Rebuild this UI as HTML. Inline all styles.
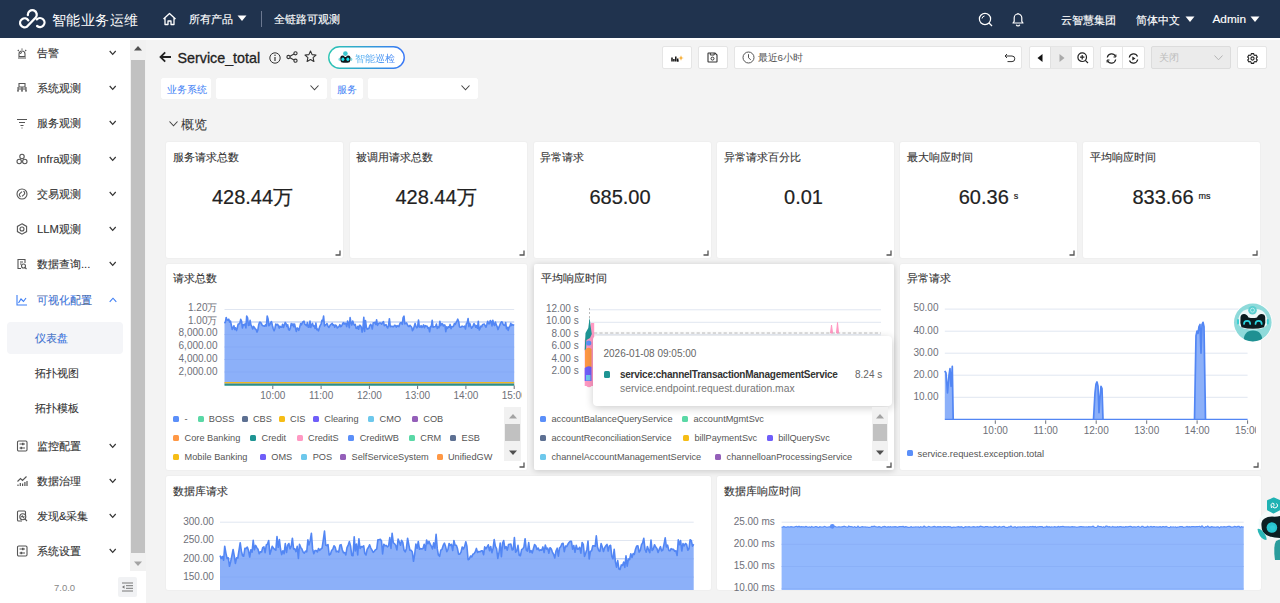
<!DOCTYPE html><html><head><meta charset="utf-8"><style>
*{box-sizing:border-box;margin:0;padding:0}
body{width:1280px;height:603px;overflow:hidden;background:#f3f3f3;-webkit-font-smoothing:antialiased;font-family:'Liberation Sans', sans-serif;position:relative;color:#333}
.a{position:absolute;white-space:nowrap}
.hd{left:0;top:0;width:1280px;height:38px;background:#20334e}
.ht{color:#fff;font-size:11.2px;line-height:14px;-webkit-text-stroke:0.15px #fff}
.sb{left:0;top:38px;width:146px;height:565px;background:#fff}
.mi{font-size:11.2px;color:#333;line-height:14px;-webkit-text-stroke:0.1px #333}
.chev{width:7px;height:7px;border-right:1.2px solid #555;border-bottom:1.2px solid #555;transform:rotate(45deg)}
.card{background:#fff;border-radius:2px;box-shadow:0 0 2px rgba(0,0,0,0.07)}
.ct{font-size:11.2px;color:#333;line-height:14px;-webkit-text-stroke:0.1px #333}
.big{font-size:20px;color:#222;line-height:24px;-webkit-text-stroke:0.2px #222}
.yl{font-size:10px;color:#6e7079;line-height:12px;text-align:right}
.xl{font-size:10px;color:#6e7079;line-height:12px}
.lg{font-size:9.2px;color:#555;line-height:12px}
.sq{width:6px;height:6px;border-radius:1.5px}
.btn{background:#fff;border:1px solid #e6e6e6;border-radius:2px}
.rz{width:4px;height:4px;border-right:1.5px solid #555;border-bottom:1.5px solid #555}
</style></head><body>

<div class="a hd"></div>
<svg class="a" style="left:15px;top:5px" width="35" height="28" viewBox="0 0 35 28">
<g fill="none" stroke="#fff" stroke-width="2.3" stroke-linecap="round">
<path d="M13.3 15.3 A4.5 4.5 0 1 0 11.8 21.8 L20.5 12.8 A4.5 4.5 0 1 0 12.8 10.0"/>
<path d="M21.8 14.4 A4.5 4.5 0 1 1 22.1 21.0"/>
</g></svg>
<div class="a" style="left:52px;top:10.5px;color:#fff;font-size:14.3px;letter-spacing:0.4px;line-height:18px">智能业务运维</div>
<svg class="a" style="left:162px;top:12px" width="15" height="14" viewBox="0 0 15 14"><path d="M1.5 7 L7.5 1.5 L13.5 7 M3 6 V12.5 H6 V9 H9 V12.5 H12 V6" fill="none" stroke="#fff" stroke-width="1.3" stroke-linejoin="round"/></svg>
<div class="a ht" style="left:188.5px;top:12.3px">所有产品</div>
<svg class="a" style="left:237px;top:15px" width="10" height="7"><path d="M0.5 0.5 L9.5 0.5 L5 6 Z" fill="#fff"/></svg>
<div class="a" style="left:261px;top:11px;width:1px;height:16px;background:#6b7890"></div>
<div class="a ht" style="left:274px;top:12.3px;font-size:11.4px">全链路可观测</div>
<svg class="a" style="left:978px;top:12px" width="16" height="15" viewBox="0 0 16 15"><circle cx="7" cy="7" r="5.6" fill="none" stroke="#fff" stroke-width="1.2"/><path d="M11 11 L14 14" stroke="#fff" stroke-width="1.3"/><path d="M4 6.5 A3 3 0 0 1 6.5 4" fill="none" stroke="#fff" stroke-width="1"/></svg>
<svg class="a" style="left:1010px;top:11px" width="16" height="16" viewBox="0 0 16 16"><path d="M3 12 H13 L11.8 10.3 V6.8 A3.8 3.8 0 0 0 4.2 6.8 V10.3 Z" fill="none" stroke="#fff" stroke-width="1.2" stroke-linejoin="round"/><path d="M6.3 13.8 A1.8 1.8 0 0 0 9.7 13.8" fill="none" stroke="#fff" stroke-width="1.2"/><path d="M8 2 V3" stroke="#fff" stroke-width="1.2"/></svg>
<div class="a ht" style="left:1061px;top:12.5px">云智慧集团</div>
<div class="a ht" style="left:1136px;top:12.5px">简体中文</div>
<svg class="a" style="left:1185px;top:16px" width="10" height="7"><path d="M0.5 0.5 L9.5 0.5 L5 6 Z" fill="#fff"/></svg>
<div class="a ht" style="left:1212.5px;top:12px;font-size:11.8px">Admin</div>
<svg class="a" style="left:1250px;top:16px" width="10" height="7"><path d="M0.5 0.5 L9.5 0.5 L5 6 Z" fill="#fff"/></svg>
<div class="a sb"></div>
<div class="a" style="left:0;top:38px;width:1280px;height:2px;background:#fff"></div>
<div class="a" style="left:130px;top:40px;width:16px;height:531px;background:#f1f1f1"></div>
<svg class="a" style="left:133px;top:45px" width="10" height="6"><path d="M1 5.5 L9 5.5 L5 1 Z" fill="#505050"/></svg>
<div class="a" style="left:131px;top:60px;width:14px;height:493px;background:#c1c1c1"></div>
<svg class="a" style="left:133px;top:561px" width="10" height="6"><path d="M1 0.5 L9 0.5 L5 5 Z" fill="#a3a3a3"/></svg>
<svg class="a" style="left:16px;top:47px" width="12" height="12" viewBox="0 0 12 12"><path d="M2 11 H10 M3 9.5 V7 A3 3 0 0 1 9 7 V9.5 Z M6 1.5 V2.8 M1.8 3 L2.8 4 M10.2 3 L9.2 4" fill="none" stroke="#555" stroke-width="1.1"/><path d="M4.5 7 A1.5 1.5 0 0 1 6 5.5" fill="none" stroke="#555" stroke-width="1.1"/></svg>
<div class="a mi" style="left:37px;top:46px;color:#333">告警</div>
<svg class="a" style="left:108.5px;top:50.2px" width="8" height="6"><path d="M0.7 1 L3.7 4.4 L6.7 1" fill="none" stroke="#333" stroke-width="1.15"/></svg>
<svg class="a" style="left:16px;top:82px" width="12" height="12" viewBox="0 0 12 12"><path d="M3 1.5 H9 V5 H3 Z M2 5 V9 M6 5 V9 M10 5 V9 M1 9 H3 M5 9 H7 M9 9 H11 M2 7 H10" fill="none" stroke="#555" stroke-width="1.1"/></svg>
<div class="a mi" style="left:37px;top:81px;color:#333">系统观测</div>
<svg class="a" style="left:108.5px;top:85.2px" width="8" height="6"><path d="M0.7 1 L3.7 4.4 L6.7 1" fill="none" stroke="#333" stroke-width="1.15"/></svg>
<svg class="a" style="left:16px;top:117px" width="12" height="12" viewBox="0 0 12 12"><path d="M1 2.5 H11 M3 5.5 H9 M4.5 8.5 H7.5 M5.5 11 H6.5" fill="none" stroke="#555" stroke-width="1.1"/></svg>
<div class="a mi" style="left:37px;top:116px;color:#333">服务观测</div>
<svg class="a" style="left:108.5px;top:120.2px" width="8" height="6"><path d="M0.7 1 L3.7 4.4 L6.7 1" fill="none" stroke="#333" stroke-width="1.15"/></svg>
<svg class="a" style="left:16px;top:152.5px" width="12" height="12" viewBox="0 0 12 12"><circle cx="6" cy="3.5" r="2.2" fill="none" stroke="#555" stroke-width="1.1"/><circle cx="3.2" cy="8.5" r="2.2" fill="none" stroke="#555" stroke-width="1.1"/><circle cx="8.8" cy="8.5" r="2.2" fill="none" stroke="#555" stroke-width="1.1"/></svg>
<div class="a mi" style="left:37px;top:151.5px;color:#333">Infra观测</div>
<svg class="a" style="left:108.5px;top:155.7px" width="8" height="6"><path d="M0.7 1 L3.7 4.4 L6.7 1" fill="none" stroke="#333" stroke-width="1.15"/></svg>
<svg class="a" style="left:16px;top:187.5px" width="12" height="12" viewBox="0 0 12 12"><circle cx="6" cy="6" r="5" fill="none" stroke="#555" stroke-width="1.1"/><path d="M7.3 3.3 A1.9 1.9 0 0 1 8.2 6.4 L6 8.4 M4.7 8.7 A1.9 1.9 0 0 1 3.8 5.6 L6 3.6" fill="none" stroke="#555" stroke-width="1.1"/></svg>
<div class="a mi" style="left:37px;top:186.5px;color:#333">交易观测</div>
<svg class="a" style="left:108.5px;top:190.7px" width="8" height="6"><path d="M0.7 1 L3.7 4.4 L6.7 1" fill="none" stroke="#333" stroke-width="1.15"/></svg>
<svg class="a" style="left:16px;top:222.5px" width="12" height="12" viewBox="0 0 12 12"><path d="M6 0.8 L10.6 3.4 V8.6 L6 11.2 L1.4 8.6 V3.4 Z" fill="none" stroke="#555" stroke-width="1.1"/><circle cx="6" cy="6" r="2" fill="none" stroke="#555" stroke-width="1.1"/></svg>
<div class="a mi" style="left:37px;top:221.5px;color:#333">LLM观测</div>
<svg class="a" style="left:108.5px;top:225.7px" width="8" height="6"><path d="M0.7 1 L3.7 4.4 L6.7 1" fill="none" stroke="#333" stroke-width="1.15"/></svg>
<svg class="a" style="left:16px;top:258px" width="12" height="12" viewBox="0 0 12 12"><path d="M9 5 V1.5 H2 V10.5 H5 M4 4 H7 M4 6 H5.5" fill="none" stroke="#555" stroke-width="1.1"/><circle cx="7.5" cy="8" r="2" fill="none" stroke="#555" stroke-width="1.1"/><path d="M9 9.5 L10.5 11" fill="none" stroke="#555" stroke-width="1.1"/></svg>
<div class="a mi" style="left:37px;top:257px;color:#333">数据查询...</div>
<svg class="a" style="left:108.5px;top:261.2px" width="8" height="6"><path d="M0.7 1 L3.7 4.4 L6.7 1" fill="none" stroke="#333" stroke-width="1.15"/></svg>
<svg class="a" style="left:16px;top:294px" width="12" height="12" viewBox="0 0 12 12"><path d="M1 1 V11 H11 M2.5 9 L5 5 L7.5 7.5 L10 4" fill="none" stroke="#3d7ef5" stroke-width="1.1"/></svg>
<div class="a mi" style="left:37px;top:293px;color:#3d7ef5">可视化配置</div>
<svg class="a" style="left:108.5px;top:297px" width="8" height="6"><path d="M0.7 4.8 L4 1.2 L7.3 4.8" fill="none" stroke="#3d7ef5" stroke-width="1.1"/></svg>
<svg class="a" style="left:16px;top:440px" width="12" height="12" viewBox="0 0 12 12"><rect x="1.5" y="1" width="9.5" height="10" rx="1.2" fill="none" stroke="#555" stroke-width="1.1"/><path d="M3.5 4 H9 M3.5 8 H9" fill="none" stroke="#555" stroke-width="1.1"/><rect x="6" y="2.8" width="1.6" height="2.4" fill="#555"/><rect x="4.5" y="6.8" width="1.6" height="2.4" fill="#555"/></svg>
<div class="a mi" style="left:37px;top:439px;color:#333">监控配置</div>
<svg class="a" style="left:108.5px;top:443.2px" width="8" height="6"><path d="M0.7 1 L3.7 4.4 L6.7 1" fill="none" stroke="#333" stroke-width="1.15"/></svg>
<svg class="a" style="left:16px;top:475px" width="12" height="12" viewBox="0 0 12 12"><path d="M1.5 6.5 L4.5 3.5 L6.5 5.5 L10.5 1.5" fill="none" stroke="#555" stroke-width="1.1"/><path d="M2 11 V9.5 M4.3 11 V8 M6.6 11 V8.5 M8.9 11 V7 M11 11 V6" stroke="#555" stroke-width="1.2"/></svg>
<div class="a mi" style="left:37px;top:474px;color:#333">数据治理</div>
<svg class="a" style="left:108.5px;top:478.2px" width="8" height="6"><path d="M0.7 1 L3.7 4.4 L6.7 1" fill="none" stroke="#333" stroke-width="1.15"/></svg>
<svg class="a" style="left:16px;top:510px" width="12" height="12" viewBox="0 0 12 12"><path d="M9.5 5 V2 Q9.5 1 8.5 1 H2.5 Q1.5 1 1.5 2 V10 Q1.5 11 2.5 11 H6" fill="none" stroke="#555" stroke-width="1.1"/><circle cx="6.8" cy="6.8" r="3" fill="none" stroke="#555" stroke-width="1.1"/><path d="M5.2 7.2 L6.3 6 L7.3 7.5 L8.4 6.3" fill="none" stroke="#555" stroke-width="1.1"/><path d="M9 9 L11 11" fill="none" stroke="#555" stroke-width="1.1"/></svg>
<div class="a mi" style="left:37px;top:509px;color:#333">发现&采集</div>
<svg class="a" style="left:108.5px;top:513.2px" width="8" height="6"><path d="M0.7 1 L3.7 4.4 L6.7 1" fill="none" stroke="#333" stroke-width="1.15"/></svg>
<svg class="a" style="left:16px;top:545px" width="12" height="12" viewBox="0 0 12 12"><rect x="1.5" y="1" width="9.5" height="10" rx="1.2" fill="none" stroke="#555" stroke-width="1.1"/><path d="M3.5 4 H9 M3.5 8 H9" fill="none" stroke="#555" stroke-width="1.1"/><rect x="6" y="2.8" width="1.6" height="2.4" fill="#555"/><rect x="4.5" y="6.8" width="1.6" height="2.4" fill="#555"/></svg>
<div class="a mi" style="left:37px;top:544px;color:#333">系统设置</div>
<svg class="a" style="left:108.5px;top:548.2px" width="8" height="6"><path d="M0.7 1 L3.7 4.4 L6.7 1" fill="none" stroke="#333" stroke-width="1.15"/></svg>
<div class="a" style="left:7px;top:322px;width:116px;height:32px;background:#f4f5f8;border-radius:4px"></div>
<div class="a mi" style="left:35px;top:331px;color:#3d7ef5">仪表盘</div>
<div class="a mi" style="left:35px;top:365.5px">拓扑视图</div>
<div class="a mi" style="left:35px;top:400.5px">拓扑模板</div>
<div class="a" style="left:54px;top:582px;font-size:9.5px;color:#888;line-height:12px">7.0.0</div>
<div class="a" style="left:118px;top:577px;width:19px;height:20px;background:#f1f2f4;border-radius:2px"></div>
<svg class="a" style="left:121px;top:582px" width="13" height="10"><path d="M1 1 H12 M5 3.7 H12 M5 6.3 H12 M1 9 H12" stroke="#777" stroke-width="1"/><path d="M3.5 3.3 L1 5 L3.5 6.7 Z" fill="#777"/></svg>
<svg class="a" style="left:159px;top:51px" width="13" height="12" viewBox="0 0 13 12"><path d="M12 6 H1.8 M6.2 1.4 L1.5 6 L6.2 10.6" fill="none" stroke="#222" stroke-width="1.8"/></svg>
<div class="a" style="left:177.5px;top:49px;font-size:14.3px;line-height:18px;color:#222;-webkit-text-stroke:0.3px #222">Service_total</div>
<svg class="a" style="left:269px;top:51.5px" width="12" height="12" viewBox="0 0 12 12"><circle cx="6" cy="6" r="5.2" fill="none" stroke="#333" stroke-width="1"/><path d="M6 5 V9" stroke="#333" stroke-width="1.2"/><circle cx="6" cy="3.3" r="0.75" fill="#333"/></svg>
<svg class="a" style="left:286px;top:51px" width="12" height="12" viewBox="0 0 12 12"><circle cx="9.5" cy="2.3" r="1.6" fill="none" stroke="#333" stroke-width="1.1"/><circle cx="2.5" cy="6" r="1.6" fill="none" stroke="#333" stroke-width="1.1"/><circle cx="9.5" cy="9.7" r="1.6" fill="none" stroke="#333" stroke-width="1.1"/><path d="M4 5.2 L8 3.1 M4 6.8 L8 8.9" stroke="#333" stroke-width="1.1"/></svg>
<svg class="a" style="left:304px;top:50px" width="13" height="13" viewBox="0 0 13 13"><path d="M6.5 1 L8.1 4.6 L12 5 L9.1 7.6 L9.9 11.5 L6.5 9.5 L3.1 11.5 L3.9 7.6 L1 5 L4.9 4.6 Z" fill="none" stroke="#333" stroke-width="1.1" stroke-linejoin="round"/></svg>
<svg class="a" style="left:328px;top:46px" width="77" height="23" viewBox="0 0 77 23"><defs><linearGradient id="gb" x1="0" x2="1"><stop offset="0" stop-color="#2cc5b3"/><stop offset="1" stop-color="#3a78f6"/></linearGradient><linearGradient id="gt" x1="0" x2="1"><stop offset="0" stop-color="#56c0ee"/><stop offset="1" stop-color="#3f86f4"/></linearGradient></defs>
<rect x="0.75" y="0.75" width="75.5" height="21.5" rx="10.75" fill="#fff" stroke="url(#gb)" stroke-width="1.4"/>
<circle cx="17.4" cy="7.6" r="2.3" fill="#3cc8cf"/>
<path d="M12.3 11.5 Q12.6 9.4 14.5 9.4 Q16 9.4 16.6 10.7 Q17.4 11.1 18.2 10.7 Q18.8 9.4 20.3 9.4 Q22.2 9.4 22.5 11.5 Q23 14.6 21.6 16.2 Q17.4 17.5 13.2 16.2 Q11.8 14.6 12.3 11.5 Z" fill="#0d1a1e"/>
<ellipse cx="14.9" cy="13.2" rx="1.5" ry="1.7" fill="#1ee3ee"/><ellipse cx="19.9" cy="13.2" rx="1.5" ry="1.7" fill="#1ee3ee"/>
<ellipse cx="11.4" cy="13.3" rx="0.9" ry="1.6" fill="#5ccfd6" opacity="0.8"/><ellipse cx="23.4" cy="13.3" rx="0.9" ry="1.6" fill="#5ccfd6" opacity="0.8"/>
</svg>
<div class="a" style="left:355px;top:52.5px;font-size:9.8px;line-height:12px;background:linear-gradient(90deg,#5ab9ef,#3e82f5);-webkit-background-clip:text;color:transparent">智能巡检</div>
<div class="a" style="left:662px;top:46px;width:30px;height:23px;background:#fff;border:1px solid #e5e5e5;border-radius:2px;"></div>
<svg class="a" style="left:670.5px;top:53.5px" width="13" height="8" viewBox="0 0 13 8"><path d="M1 7.5 V3.5 M2.9 7.5 V5 M4.8 7.5 V2.5 M6.7 7.5 V4.5" stroke="#111" stroke-width="1.5"/><path d="M6.2 7 H7.6" stroke="#111" stroke-width="1"/><path d="M10 1.2 L10.8 3.4 L12.8 4 L10.8 4.6 L10 6.8 L9.2 4.6 L7.2 4 L9.2 3.4 Z" fill="#f7a928"/></svg>
<div class="a" style="left:698px;top:46px;width:30px;height:23px;background:#fff;border:1px solid #e5e5e5;border-radius:2px;"></div>
<svg class="a" style="left:707px;top:52px" width="11" height="11" viewBox="0 0 11 11"><path d="M1 1.5 Q1 1 1.5 1 H8 L10 3 V9.5 Q10 10 9.5 10 H1.5 Q1 10 1 9.5 Z" fill="none" stroke="#333" stroke-width="1.1"/><path d="M3.3 1 V3 H7.2 V1" fill="none" stroke="#333" stroke-width="1"/><circle cx="5.5" cy="6.6" r="1.5" fill="none" stroke="#333" stroke-width="1"/></svg>
<div class="a" style="left:734px;top:46px;width:288px;height:23px;background:#fff;border:1px solid #e5e5e5;border-radius:2px;"></div>
<svg class="a" style="left:742px;top:51px" width="13" height="13" viewBox="0 0 13 13"><circle cx="6.5" cy="6.5" r="5.5" fill="none" stroke="#555" stroke-width="1"/><path d="M6.5 3.2 V6.8 L8.8 8.8" fill="none" stroke="#555" stroke-width="1"/></svg>
<div class="a" style="left:757.5px;top:51.5px;font-size:9.8px;line-height:12px;color:#555">最近6小时</div>
<svg class="a" style="left:1004px;top:53px" width="12" height="10" viewBox="0 0 12 10"><path d="M3 1 L1 3 L3 5" fill="none" stroke="#333" stroke-width="1"/><path d="M1.2 3 H8 A2.8 2.8 0 0 1 8 8.6 H3.5" fill="none" stroke="#333" stroke-width="1"/></svg>
<div class="a" style="left:1029px;top:46px;width:65px;height:23px;background:#fff;border:1px solid #e5e5e5;border-radius:2px;"></div>
<div class="a" style="left:1050px;top:47px;width:22px;height:21px;background:#ececec;border-left:1px solid #e0e0e0;border-right:1px solid #e8e8e8"></div>
<svg class="a" style="left:1037px;top:54px" width="6" height="8"><path d="M5.5 0 V8 L0.5 4 Z" fill="#111"/></svg>
<svg class="a" style="left:1059px;top:54px" width="6" height="8"><path d="M0.5 0 V8 L5.5 4 Z" fill="#aaa"/></svg>
<svg class="a" style="left:1077px;top:52px" width="12" height="12" viewBox="0 0 12 12"><circle cx="5.2" cy="5.2" r="4.3" fill="none" stroke="#222" stroke-width="1.2"/><path d="M8.3 8.3 L11 11 M5.2 3 V7.4 M3 5.2 H7.4" stroke="#222" stroke-width="1.2"/></svg>
<div class="a" style="left:1100px;top:46px;width:45px;height:23px;background:#fff;border:1px solid #e5e5e5;border-radius:2px;"></div>
<div class="a" style="left:1122px;top:47px;width:1px;height:21px;background:#e6e6e6"></div>
<svg class="a" style="left:1106px;top:53px" width="11" height="11" viewBox="0 0 11 11"><path d="M1.3 4.5 A4.3 4.3 0 0 1 9.5 3.5 M9.7 6.5 A4.3 4.3 0 0 1 1.5 7.5" fill="none" stroke="#222" stroke-width="1.2"/><path d="M9.9 1.5 V4 H7.5 M1.1 9.5 V7 H3.5" fill="none" stroke="#222" stroke-width="1"/></svg>
<svg class="a" style="left:1127.5px;top:53px" width="11" height="11" viewBox="0 0 11 11"><path d="M1.3 4.5 A4.3 4.3 0 0 1 9.5 3.5 M9.7 6.5 A4.3 4.3 0 0 1 1.5 7.5" fill="none" stroke="#222" stroke-width="1.2"/><path d="M4.3 3.5 V7.5 L7.5 5.5 Z" fill="#222"/></svg>
<div class="a" style="left:1151px;top:46px;width:80px;height:23px;background:#ebebeb;border:1px solid #dcdcdc;border-radius:2px;"></div>
<div class="a" style="left:1158.5px;top:51.5px;font-size:9.8px;line-height:12px;color:#bdbdbd">关闭</div>
<svg class="a" style="left:1214px;top:55px" width="9" height="6"><path d="M0.5 0.5 L4.5 4.8 L8.5 0.5" fill="none" stroke="#b5b5b5" stroke-width="1"/></svg>
<div class="a" style="left:1237px;top:46px;width:30px;height:23px;background:#fff;border:1px solid #e5e5e5;border-radius:2px;"></div>
<svg class="a" style="left:1247px;top:52.5px" width="11" height="11" viewBox="0 0 11 11"><path d="M4.29 0.65 L6.71 0.65 L6.96 1.88 L7.90 2.43 L9.10 2.03 L10.31 4.12 L9.36 4.96 L9.36 6.04 L10.31 6.88 L9.10 8.97 L7.90 8.57 L6.96 9.12 L6.71 10.35 L4.29 10.35 L4.04 9.12 L3.10 8.57 L1.90 8.97 L0.69 6.88 L1.64 6.04 L1.64 4.96 L0.69 4.12 L1.90 2.03 L3.10 2.43 L4.04 1.88 Z" fill="none" stroke="#222" stroke-width="1.1" stroke-linejoin="round"/><circle cx="5.5" cy="5.5" r="1.6" fill="none" stroke="#222" stroke-width="1.1"/></svg>
<div class="a" style="left:161px;top:78px;width:50px;height:21px;background:#fff;border:1px solid #fff;border-radius:2px;"></div>
<div class="a" style="left:166.5px;top:84px;font-size:9.8px;line-height:12px;color:#3d7ef5">业务系统</div>
<div class="a" style="left:215.5px;top:78px;width:111.5px;height:21px;background:#fff;border:1px solid #fff;border-radius:2px;"></div>
<svg class="a" style="left:310px;top:85px" width="9" height="6"><path d="M0.5 0.5 L4.5 4.8 L8.5 0.5" fill="none" stroke="#444" stroke-width="1.1"/></svg>
<div class="a" style="left:331px;top:78px;width:32px;height:21px;background:#fff;border:1px solid #fff;border-radius:2px;"></div>
<div class="a" style="left:337px;top:84px;font-size:9.8px;line-height:12px;color:#3d7ef5">服务</div>
<div class="a" style="left:367.5px;top:78px;width:110.5px;height:21px;background:#fff;border:1px solid #fff;border-radius:2px;"></div>
<svg class="a" style="left:461px;top:85px" width="9" height="6"><path d="M0.5 0.5 L4.5 4.8 L8.5 0.5" fill="none" stroke="#444" stroke-width="1.1"/></svg>
<svg class="a" style="left:169px;top:121px" width="9" height="6"><path d="M0.5 0.5 L4.5 4.8 L8.5 0.5" fill="none" stroke="#444" stroke-width="1.1"/></svg>
<div class="a" style="left:180.5px;top:117px;font-size:12.8px;line-height:16px;color:#333">概览</div>
<div class="a card" style="left:166px;top:142px;width:177px;height:116px"></div>
<div class="a ct" style="left:172.5px;top:150px">服务请求总数</div>
<div class="a big" style="left:164px;top:185px;width:177px;text-align:center">428.44万</div>
<svg class="a" style="left:335px;top:250px" width="6" height="6"><path d="M5 0.5 V5 H0.5" fill="none" stroke="#555" stroke-width="1.3"/></svg>
<div class="a card" style="left:349.5px;top:142px;width:177.0px;height:116px"></div>
<div class="a ct" style="left:356.0px;top:150px">被调用请求总数</div>
<div class="a big" style="left:347.5px;top:185px;width:177.0px;text-align:center">428.44万</div>
<svg class="a" style="left:518.5px;top:250px" width="6" height="6"><path d="M5 0.5 V5 H0.5" fill="none" stroke="#555" stroke-width="1.3"/></svg>
<div class="a card" style="left:533.5px;top:142px;width:177.0px;height:116px"></div>
<div class="a ct" style="left:540.0px;top:150px">异常请求</div>
<div class="a big" style="left:531.5px;top:185px;width:177.0px;text-align:center">685.00</div>
<svg class="a" style="left:702.5px;top:250px" width="6" height="6"><path d="M5 0.5 V5 H0.5" fill="none" stroke="#555" stroke-width="1.3"/></svg>
<div class="a card" style="left:717px;top:142px;width:177px;height:116px"></div>
<div class="a ct" style="left:723.5px;top:150px">异常请求百分比</div>
<div class="a big" style="left:715px;top:185px;width:177px;text-align:center">0.01</div>
<svg class="a" style="left:886px;top:250px" width="6" height="6"><path d="M5 0.5 V5 H0.5" fill="none" stroke="#555" stroke-width="1.3"/></svg>
<div class="a card" style="left:900px;top:142px;width:177px;height:116px"></div>
<div class="a ct" style="left:906.5px;top:150px">最大响应时间</div>
<div class="a" style="left:900px;top:185px;width:177px;text-align:center;font-size:20px;line-height:24px;color:#222;-webkit-text-stroke:0.2px #222"><span>60.36</span><span style="font-size:9px;position:relative;top:-5px;margin-left:5px">s</span></div>
<svg class="a" style="left:1069px;top:250px" width="6" height="6"><path d="M5 0.5 V5 H0.5" fill="none" stroke="#555" stroke-width="1.3"/></svg>
<div class="a card" style="left:1083px;top:142px;width:177px;height:116px"></div>
<div class="a ct" style="left:1089.5px;top:150px">平均响应时间</div>
<div class="a" style="left:1083px;top:185px;width:177px;text-align:center;font-size:20px;line-height:24px;color:#222;-webkit-text-stroke:0.2px #222"><span>833.66</span><span style="font-size:9px;position:relative;top:-5px;margin-left:5px">ms</span></div>
<svg class="a" style="left:1252px;top:250px" width="6" height="6"><path d="M5 0.5 V5 H0.5" fill="none" stroke="#555" stroke-width="1.3"/></svg>
<div class="a card" style="left:166px;top:264px;width:361px;height:206px;"></div>
<div class="a ct" style="left:173px;top:271.3px">请求总数</div>
<svg class="a" style="left:519px;top:462px" width="6" height="6"><path d="M5 0.5 V5 H0.5" fill="none" stroke="#555" stroke-width="1.3"/></svg>
<svg class="a" style="left:0;top:0" width="1280" height="603">
<line x1="224.5" x2="514.2" y1="309.5" y2="309.5" stroke="#e0e6f1" stroke-width="1"/>
<line x1="224.5" x2="514.2" y1="322.0" y2="322.0" stroke="#e0e6f1" stroke-width="1"/>
<line x1="224.5" x2="514.2" y1="334.5" y2="334.5" stroke="#e0e6f1" stroke-width="1"/>
<line x1="224.5" x2="514.2" y1="347.0" y2="347.0" stroke="#e0e6f1" stroke-width="1"/>
<line x1="224.5" x2="514.2" y1="359.5" y2="359.5" stroke="#e0e6f1" stroke-width="1"/>
<line x1="224.5" x2="514.2" y1="372.0" y2="372.0" stroke="#e0e6f1" stroke-width="1"/>
<path d="M224.5 384.5 L224.5 323.3 L225.4 322.1 L226.2 317.5 L227.1 320.0 L227.9 320.1 L228.8 319.2 L229.6 322.1 L230.5 321.1 L231.3 325.0 L232.2 329.4 L233.0 327.9 L233.9 325.8 L234.8 329.5 L235.6 327.8 L236.5 330.6 L237.3 327.9 L238.2 324.0 L239.0 324.0 L239.9 322.9 L240.7 319.4 L241.6 321.4 L242.4 328.0 L243.3 324.6 L244.2 324.9 L245.0 323.9 L245.9 327.9 L246.7 316.0 L247.6 317.9 L248.4 325.4 L249.3 325.1 L250.1 320.4 L251.0 325.1 L251.8 326.4 L252.7 329.0 L253.6 326.4 L254.4 327.5 L255.3 329.0 L256.1 329.4 L257.0 332.1 L257.8 330.2 L258.7 324.8 L259.5 322.4 L260.4 322.2 L261.2 323.2 L262.1 325.2 L263.0 325.8 L263.8 326.0 L264.7 326.3 L265.5 324.8 L266.4 325.9 L267.2 316.1 L268.1 319.1 L268.9 325.8 L269.8 324.8 L270.6 322.8 L271.5 321.6 L272.4 325.5 L273.2 328.5 L274.1 330.8 L274.9 328.4 L275.8 324.0 L276.6 324.9 L277.5 324.3 L278.3 325.5 L279.2 328.1 L280.0 326.2 L280.9 327.2 L281.8 327.2 L282.6 324.3 L283.5 327.4 L284.3 324.9 L285.2 322.4 L286.0 323.4 L286.9 326.5 L287.7 324.8 L288.6 329.5 L289.4 330.1 L290.3 328.2 L291.2 323.6 L292.0 325.3 L292.9 323.8 L293.7 326.8 L294.6 324.1 L295.4 327.7 L296.3 331.4 L297.1 328.0 L298.0 328.7 L298.8 330.4 L299.7 327.1 L300.6 323.6 L301.4 324.9 L302.3 322.7 L303.1 321.6 L304.0 321.1 L304.8 324.2 L305.7 325.0 L306.5 325.8 L307.4 322.6 L308.2 327.2 L309.1 327.1 L310.0 321.0 L310.8 327.4 L311.7 324.6 L312.5 323.4 L313.4 326.3 L314.2 325.9 L315.1 328.4 L315.9 323.0 L316.8 329.7 L317.6 329.1 L318.5 330.9 L319.4 327.6 L320.2 325.5 L321.1 324.1 L321.9 320.3 L322.8 320.8 L323.6 316.1 L324.5 326.0 L325.3 325.0 L326.2 324.5 L327.0 323.5 L327.9 325.8 L328.8 327.5 L329.6 326.3 L330.5 324.7 L331.3 324.2 L332.2 323.4 L333.0 325.2 L333.9 324.8 L334.7 327.2 L335.6 325.0 L336.4 325.8 L337.3 328.0 L338.2 327.1 L339.0 326.6 L339.9 324.7 L340.7 326.7 L341.6 326.0 L342.4 324.2 L343.3 322.7 L344.1 324.1 L345.0 323.1 L345.8 323.5 L346.7 326.6 L347.6 321.0 L348.4 323.3 L349.3 327.7 L350.1 317.6 L351.0 322.8 L351.8 325.1 L352.7 321.1 L353.5 323.6 L354.4 325.2 L355.2 324.3 L356.1 328.2 L357.0 328.4 L357.8 326.4 L358.7 329.2 L359.5 325.2 L360.4 325.6 L361.2 327.0 L362.1 332.1 L362.9 328.5 L363.8 317.2 L364.6 331.5 L365.5 320.5 L366.4 327.3 L367.2 329.2 L368.1 328.6 L368.9 328.4 L369.8 325.6 L370.6 324.3 L371.5 325.7 L372.3 329.0 L373.2 322.9 L374.1 322.7 L374.9 322.4 L375.8 324.5 L376.6 319.9 L377.5 325.4 L378.3 323.9 L379.2 323.0 L380.0 323.0 L380.9 323.1 L381.7 324.2 L382.6 322.5 L383.5 321.7 L384.3 325.7 L385.2 325.1 L386.0 324.6 L386.9 326.8 L387.7 328.0 L388.6 325.2 L389.4 318.7 L390.3 326.6 L391.1 326.4 L392.0 326.2 L392.9 326.8 L393.7 326.7 L394.6 325.2 L395.4 325.5 L396.3 327.2 L397.1 325.7 L398.0 326.3 L398.8 326.6 L399.7 324.2 L400.5 322.7 L401.4 322.6 L402.3 324.3 L403.1 317.6 L404.0 316.2 L404.8 324.0 L405.7 323.2 L406.5 322.9 L407.4 324.7 L408.2 326.0 L409.1 326.6 L409.9 325.3 L410.8 326.2 L411.7 327.2 L412.5 330.7 L413.4 329.2 L414.2 326.5 L415.1 323.4 L415.9 326.4 L416.8 327.9 L417.6 326.7 L418.5 320.1 L419.3 326.9 L420.2 327.2 L421.1 325.6 L421.9 327.5 L422.8 326.4 L423.6 324.9 L424.5 327.7 L425.3 325.7 L426.2 326.3 L427.0 326.0 L427.9 328.1 L428.7 327.6 L429.6 331.8 L430.5 326.5 L431.3 326.7 L432.2 320.3 L433.0 327.1 L433.9 326.9 L434.7 326.8 L435.6 326.4 L436.4 324.1 L437.3 328.5 L438.1 326.9 L439.0 327.7 L439.9 321.4 L440.7 325.6 L441.6 323.9 L442.4 323.8 L443.3 326.0 L444.1 324.9 L445.0 325.3 L445.8 331.7 L446.7 326.7 L447.5 328.4 L448.4 326.8 L449.3 327.2 L450.1 324.4 L451.0 328.6 L451.8 326.6 L452.7 326.7 L453.5 326.2 L454.4 323.5 L455.2 324.5 L456.1 322.5 L456.9 321.2 L457.8 319.2 L458.7 321.7 L459.5 326.8 L460.4 327.3 L461.2 327.0 L462.1 326.1 L462.9 326.5 L463.8 326.7 L464.6 326.2 L465.5 328.9 L466.3 323.8 L467.2 322.9 L468.1 318.5 L468.9 326.6 L469.8 323.4 L470.6 325.8 L471.5 328.3 L472.3 327.3 L473.2 325.6 L474.0 323.6 L474.9 324.9 L475.7 327.3 L476.6 325.6 L477.5 328.3 L478.3 321.3 L479.2 330.0 L480.0 328.5 L480.9 326.1 L481.7 326.7 L482.6 324.5 L483.4 324.3 L484.3 324.0 L485.1 325.8 L486.0 327.2 L486.9 324.3 L487.7 321.2 L488.6 323.8 L489.4 323.8 L490.3 320.5 L491.1 321.5 L492.0 325.9 L492.8 320.2 L493.7 324.2 L494.5 325.5 L495.4 322.0 L496.3 324.9 L497.1 326.6 L498.0 329.6 L498.8 327.4 L499.7 325.4 L500.5 323.4 L501.4 321.9 L502.2 322.0 L503.1 324.3 L503.9 325.2 L504.8 325.5 L505.7 322.5 L506.5 328.7 L507.4 327.3 L508.2 330.4 L509.1 327.1 L509.9 326.2 L510.8 323.3 L511.6 325.4 L512.5 324.6 L513.3 324.9 L514.2 325.3 L514.2 384.5 Z" fill="#8cb0f9"/>
<line x1="224.5" x2="514.2" y1="322.0" y2="322.0" stroke="#82a5f3" stroke-width="1" opacity="0.5"/>
<line x1="224.5" x2="514.2" y1="334.5" y2="334.5" stroke="#82a5f3" stroke-width="1" opacity="0.5"/>
<line x1="224.5" x2="514.2" y1="347.0" y2="347.0" stroke="#82a5f3" stroke-width="1" opacity="0.5"/>
<line x1="224.5" x2="514.2" y1="359.5" y2="359.5" stroke="#82a5f3" stroke-width="1" opacity="0.5"/>
<line x1="224.5" x2="514.2" y1="372.0" y2="372.0" stroke="#82a5f3" stroke-width="1" opacity="0.5"/>
<path d="M224.5 323.3 L225.4 322.1 L226.2 317.5 L227.1 320.0 L227.9 320.1 L228.8 319.2 L229.6 322.1 L230.5 321.1 L231.3 325.0 L232.2 329.4 L233.0 327.9 L233.9 325.8 L234.8 329.5 L235.6 327.8 L236.5 330.6 L237.3 327.9 L238.2 324.0 L239.0 324.0 L239.9 322.9 L240.7 319.4 L241.6 321.4 L242.4 328.0 L243.3 324.6 L244.2 324.9 L245.0 323.9 L245.9 327.9 L246.7 316.0 L247.6 317.9 L248.4 325.4 L249.3 325.1 L250.1 320.4 L251.0 325.1 L251.8 326.4 L252.7 329.0 L253.6 326.4 L254.4 327.5 L255.3 329.0 L256.1 329.4 L257.0 332.1 L257.8 330.2 L258.7 324.8 L259.5 322.4 L260.4 322.2 L261.2 323.2 L262.1 325.2 L263.0 325.8 L263.8 326.0 L264.7 326.3 L265.5 324.8 L266.4 325.9 L267.2 316.1 L268.1 319.1 L268.9 325.8 L269.8 324.8 L270.6 322.8 L271.5 321.6 L272.4 325.5 L273.2 328.5 L274.1 330.8 L274.9 328.4 L275.8 324.0 L276.6 324.9 L277.5 324.3 L278.3 325.5 L279.2 328.1 L280.0 326.2 L280.9 327.2 L281.8 327.2 L282.6 324.3 L283.5 327.4 L284.3 324.9 L285.2 322.4 L286.0 323.4 L286.9 326.5 L287.7 324.8 L288.6 329.5 L289.4 330.1 L290.3 328.2 L291.2 323.6 L292.0 325.3 L292.9 323.8 L293.7 326.8 L294.6 324.1 L295.4 327.7 L296.3 331.4 L297.1 328.0 L298.0 328.7 L298.8 330.4 L299.7 327.1 L300.6 323.6 L301.4 324.9 L302.3 322.7 L303.1 321.6 L304.0 321.1 L304.8 324.2 L305.7 325.0 L306.5 325.8 L307.4 322.6 L308.2 327.2 L309.1 327.1 L310.0 321.0 L310.8 327.4 L311.7 324.6 L312.5 323.4 L313.4 326.3 L314.2 325.9 L315.1 328.4 L315.9 323.0 L316.8 329.7 L317.6 329.1 L318.5 330.9 L319.4 327.6 L320.2 325.5 L321.1 324.1 L321.9 320.3 L322.8 320.8 L323.6 316.1 L324.5 326.0 L325.3 325.0 L326.2 324.5 L327.0 323.5 L327.9 325.8 L328.8 327.5 L329.6 326.3 L330.5 324.7 L331.3 324.2 L332.2 323.4 L333.0 325.2 L333.9 324.8 L334.7 327.2 L335.6 325.0 L336.4 325.8 L337.3 328.0 L338.2 327.1 L339.0 326.6 L339.9 324.7 L340.7 326.7 L341.6 326.0 L342.4 324.2 L343.3 322.7 L344.1 324.1 L345.0 323.1 L345.8 323.5 L346.7 326.6 L347.6 321.0 L348.4 323.3 L349.3 327.7 L350.1 317.6 L351.0 322.8 L351.8 325.1 L352.7 321.1 L353.5 323.6 L354.4 325.2 L355.2 324.3 L356.1 328.2 L357.0 328.4 L357.8 326.4 L358.7 329.2 L359.5 325.2 L360.4 325.6 L361.2 327.0 L362.1 332.1 L362.9 328.5 L363.8 317.2 L364.6 331.5 L365.5 320.5 L366.4 327.3 L367.2 329.2 L368.1 328.6 L368.9 328.4 L369.8 325.6 L370.6 324.3 L371.5 325.7 L372.3 329.0 L373.2 322.9 L374.1 322.7 L374.9 322.4 L375.8 324.5 L376.6 319.9 L377.5 325.4 L378.3 323.9 L379.2 323.0 L380.0 323.0 L380.9 323.1 L381.7 324.2 L382.6 322.5 L383.5 321.7 L384.3 325.7 L385.2 325.1 L386.0 324.6 L386.9 326.8 L387.7 328.0 L388.6 325.2 L389.4 318.7 L390.3 326.6 L391.1 326.4 L392.0 326.2 L392.9 326.8 L393.7 326.7 L394.6 325.2 L395.4 325.5 L396.3 327.2 L397.1 325.7 L398.0 326.3 L398.8 326.6 L399.7 324.2 L400.5 322.7 L401.4 322.6 L402.3 324.3 L403.1 317.6 L404.0 316.2 L404.8 324.0 L405.7 323.2 L406.5 322.9 L407.4 324.7 L408.2 326.0 L409.1 326.6 L409.9 325.3 L410.8 326.2 L411.7 327.2 L412.5 330.7 L413.4 329.2 L414.2 326.5 L415.1 323.4 L415.9 326.4 L416.8 327.9 L417.6 326.7 L418.5 320.1 L419.3 326.9 L420.2 327.2 L421.1 325.6 L421.9 327.5 L422.8 326.4 L423.6 324.9 L424.5 327.7 L425.3 325.7 L426.2 326.3 L427.0 326.0 L427.9 328.1 L428.7 327.6 L429.6 331.8 L430.5 326.5 L431.3 326.7 L432.2 320.3 L433.0 327.1 L433.9 326.9 L434.7 326.8 L435.6 326.4 L436.4 324.1 L437.3 328.5 L438.1 326.9 L439.0 327.7 L439.9 321.4 L440.7 325.6 L441.6 323.9 L442.4 323.8 L443.3 326.0 L444.1 324.9 L445.0 325.3 L445.8 331.7 L446.7 326.7 L447.5 328.4 L448.4 326.8 L449.3 327.2 L450.1 324.4 L451.0 328.6 L451.8 326.6 L452.7 326.7 L453.5 326.2 L454.4 323.5 L455.2 324.5 L456.1 322.5 L456.9 321.2 L457.8 319.2 L458.7 321.7 L459.5 326.8 L460.4 327.3 L461.2 327.0 L462.1 326.1 L462.9 326.5 L463.8 326.7 L464.6 326.2 L465.5 328.9 L466.3 323.8 L467.2 322.9 L468.1 318.5 L468.9 326.6 L469.8 323.4 L470.6 325.8 L471.5 328.3 L472.3 327.3 L473.2 325.6 L474.0 323.6 L474.9 324.9 L475.7 327.3 L476.6 325.6 L477.5 328.3 L478.3 321.3 L479.2 330.0 L480.0 328.5 L480.9 326.1 L481.7 326.7 L482.6 324.5 L483.4 324.3 L484.3 324.0 L485.1 325.8 L486.0 327.2 L486.9 324.3 L487.7 321.2 L488.6 323.8 L489.4 323.8 L490.3 320.5 L491.1 321.5 L492.0 325.9 L492.8 320.2 L493.7 324.2 L494.5 325.5 L495.4 322.0 L496.3 324.9 L497.1 326.6 L498.0 329.6 L498.8 327.4 L499.7 325.4 L500.5 323.4 L501.4 321.9 L502.2 322.0 L503.1 324.3 L503.9 325.2 L504.8 325.5 L505.7 322.5 L506.5 328.7 L507.4 327.3 L508.2 330.4 L509.1 327.1 L509.9 326.2 L510.8 323.3 L511.6 325.4 L512.5 324.6 L513.3 324.9 L514.2 325.3" fill="none" stroke="#5286f4" stroke-width="1.6" stroke-linejoin="round"/>
<path d="M224.5 382.7 H514.2" stroke="#f2b821" stroke-width="1.6"/>
<path d="M224.5 384.7 H514.2" stroke="#2a8f8a" stroke-width="2"/>
<line x1="272.8" x2="272.8" y1="385.5" y2="389.0" stroke="#6e7079" stroke-width="1"/>
<line x1="321.1" x2="321.1" y1="385.5" y2="389.0" stroke="#6e7079" stroke-width="1"/>
<line x1="369.4" x2="369.4" y1="385.5" y2="389.0" stroke="#6e7079" stroke-width="1"/>
<line x1="417.6" x2="417.6" y1="385.5" y2="389.0" stroke="#6e7079" stroke-width="1"/>
<line x1="465.9" x2="465.9" y1="385.5" y2="389.0" stroke="#6e7079" stroke-width="1"/>
<line x1="514.2" x2="514.2" y1="385.5" y2="389.0" stroke="#6e7079" stroke-width="1"/>
</svg>
<div class="a yl" style="left:137.5px;width:80px;top:302px">1.20万</div>
<div class="a yl" style="left:137.5px;width:80px;top:315.1px">1.00万</div>
<div class="a yl" style="left:137.5px;width:80px;top:327.3px">8,000.00</div>
<div class="a yl" style="left:137.5px;width:80px;top:340px">6,000.00</div>
<div class="a yl" style="left:137.5px;width:80px;top:352.9px">4,000.00</div>
<div class="a yl" style="left:137.5px;width:80px;top:365.6px">2,000.00</div>
<div class="a" style="left:166px;top:389px;width:356px;height:14px;overflow:hidden">
<div class="a xl" style="left:66.8px;width:80px;text-align:center;top:1px">10:00</div>
<div class="a xl" style="left:115.1px;width:80px;text-align:center;top:1px">11:00</div>
<div class="a xl" style="left:163.4px;width:80px;text-align:center;top:1px">12:00</div>
<div class="a xl" style="left:211.6px;width:80px;text-align:center;top:1px">13:00</div>
<div class="a xl" style="left:259.9px;width:80px;text-align:center;top:1px">14:00</div>
<div class="a xl" style="left:308.2px;width:80px;text-align:center;top:1px">15:00</div>
</div>
<div class="a" style="left:168px;top:409px;width:330px;height:54.19999999999999px;overflow:hidden">
<div class="a sq" style="left:5.3px;top:7.0px;background:#5b8ff9"></div>
<div class="a lg" style="left:16.6px;top:4.0px">-</div>
<div class="a sq" style="left:29.5px;top:7.0px;background:#5ad8a6"></div>
<div class="a lg" style="left:40.8px;top:4.0px">BOSS</div>
<div class="a sq" style="left:73.6px;top:7.0px;background:#5d7092"></div>
<div class="a lg" style="left:84.9px;top:4.0px">CBS</div>
<div class="a sq" style="left:110.8px;top:7.0px;background:#f6bd16"></div>
<div class="a lg" style="left:122.0px;top:4.0px">CIS</div>
<div class="a sq" style="left:145.0px;top:7.0px;background:#6f5ef9"></div>
<div class="a lg" style="left:156.3px;top:4.0px">Clearing</div>
<div class="a sq" style="left:200.3px;top:7.0px;background:#6dc8ec"></div>
<div class="a lg" style="left:211.6px;top:4.0px">CMO</div>
<div class="a sq" style="left:244.0px;top:7.0px;background:#945fb9"></div>
<div class="a lg" style="left:255.3px;top:4.0px">COB</div>
<div class="a sq" style="left:5.3px;top:26.2px;background:#ff9845"></div>
<div class="a lg" style="left:16.6px;top:23.2px">Core Banking</div>
<div class="a sq" style="left:82.3px;top:26.2px;background:#1e9493"></div>
<div class="a lg" style="left:93.6px;top:23.2px">Credit</div>
<div class="a sq" style="left:128.7px;top:26.2px;background:#ff99c3"></div>
<div class="a lg" style="left:140.0px;top:23.2px">CreditS</div>
<div class="a sq" style="left:180.4px;top:26.2px;background:#5b8ff9"></div>
<div class="a lg" style="left:191.7px;top:23.2px">CreditWB</div>
<div class="a sq" style="left:241.0px;top:26.2px;background:#5ad8a6"></div>
<div class="a lg" style="left:252.3px;top:23.2px">CRM</div>
<div class="a sq" style="left:282.3px;top:26.2px;background:#5d7092"></div>
<div class="a lg" style="left:293.6px;top:23.2px">ESB</div>
<div class="a sq" style="left:5.3px;top:45.2px;background:#f6bd16"></div>
<div class="a lg" style="left:16.6px;top:42.2px">Mobile Banking</div>
<div class="a sq" style="left:92.0px;top:45.2px;background:#6f5ef9"></div>
<div class="a lg" style="left:103.3px;top:42.2px">OMS</div>
<div class="a sq" style="left:133.4px;top:45.2px;background:#6dc8ec"></div>
<div class="a lg" style="left:144.7px;top:42.2px">POS</div>
<div class="a sq" style="left:172.3px;top:45.2px;background:#945fb9"></div>
<div class="a lg" style="left:183.6px;top:42.2px">SelfServiceSystem</div>
<div class="a sq" style="left:268.6px;top:45.2px;background:#ff9845"></div>
<div class="a lg" style="left:279.9px;top:42.2px">UnifiedGW</div>
</div>
<div class="a" style="left:504px;top:407px;width:17px;height:54px;background:#f1f1f1"></div>
<svg class="a" style="left:507.5px;top:412.5px" width="10" height="6"><path d="M1 5.5 L9 5.5 L5 1 Z" fill="#a3a3a3"/></svg>
<div class="a" style="left:505px;top:424px;width:15px;height:16.5px;background:#c1c1c1"></div>
<svg class="a" style="left:507.5px;top:450px" width="10" height="6"><path d="M1 0.5 L9 0.5 L5 5 Z" fill="#505050"/></svg>
<div class="a card" style="left:533.5px;top:264px;width:360.5px;height:206px;box-shadow:0 1px 6px rgba(0,0,0,0.18);"></div>
<div class="a ct" style="left:540.5px;top:271.3px">平均响应时间</div>
<svg class="a" style="left:886px;top:462px" width="6" height="6"><path d="M5 0.5 V5 H0.5" fill="none" stroke="#555" stroke-width="1.3"/></svg>
<svg class="a" style="left:0;top:0" width="1280" height="603">
<line x1="589" x2="881" y1="309.8" y2="309.8" stroke="#e0e6f1" stroke-width="1"/>
<line x1="589" x2="881" y1="322.3" y2="322.3" stroke="#e0e6f1" stroke-width="1"/>
<line x1="589" x2="881" y1="334.8" y2="334.8" stroke="#e0e6f1" stroke-width="1"/>
<line x1="589" x2="881" y1="347.3" y2="347.3" stroke="#e0e6f1" stroke-width="1"/>
<line x1="589" x2="881" y1="359.8" y2="359.8" stroke="#e0e6f1" stroke-width="1"/>
<line x1="589" x2="881" y1="372.3" y2="372.3" stroke="#e0e6f1" stroke-width="1"/>
<line x1="589.5" x2="589.5" y1="308" y2="384.8" stroke="#aaa" stroke-width="0.8" stroke-dasharray="2 2"/>
<line x1="594" x2="881" y1="333" y2="333" stroke="#a5a5a5" stroke-width="0.75" stroke-dasharray="3.2 2.2"/>
<path d="M584.7 386 L584.7 340 L589.5 331 L591 323 L594.2 323 L594.2 386 Z" fill="#ff99c3"/>
<path d="M584.7 350 L585.5 333 L588.3 328 L589.6 317.5 L590.9 328 L591.8 334 L590 338 L586.5 340 L586 352 Z" fill="#1e9493"/>
<circle cx="588.7" cy="343" r="2.6" fill="#5b8ff9"/>
<path d="M585 350 Q588 346 591.5 349 L591.5 367 L585 368 Z" fill="#ff9845"/>
<path d="M584.7 368 Q588 365 591.5 367 L591.5 381 L584.7 381 Z" fill="#6f5ef9"/>
<rect x="586" y="375" width="4.5" height="5.5" fill="#6dc8ec"/>
<circle cx="589" cy="384.5" r="2.8" fill="#ff99c3"/>
<path d="M830.5 333 L831.5 325 L832.5 333 Z M836.5 333 L837.5 322.5 L838.5 333 Z" fill="#ff99c3" stroke="#ff99c3" stroke-width="1"/>
</svg>
<div class="a yl" style="left:498.70000000000005px;width:80px;top:302.5px">12.00 s</div>
<div class="a yl" style="left:498.70000000000005px;width:80px;top:315.2px">10.00 s</div>
<div class="a yl" style="left:498.70000000000005px;width:80px;top:327.7px">8.00 s</div>
<div class="a yl" style="left:498.70000000000005px;width:80px;top:340.2px">6.00 s</div>
<div class="a yl" style="left:498.70000000000005px;width:80px;top:352.9px">4.00 s</div>
<div class="a yl" style="left:498.70000000000005px;width:80px;top:365.3px">2.00 s</div>
<div class="a" style="left:593px;top:335.5px;width:299px;height:70px;background:#fff;border-radius:4px;box-shadow:0 2px 8px rgba(0,0,0,0.2)"></div>
<div class="a" style="left:603.5px;top:348px;font-size:10px;line-height:12px;color:#666">2026-01-08 09:05:00</div>
<div class="a sq" style="left:603.5px;top:371px;width:6.5px;height:6.5px;background:#1e9493"></div>
<div class="a" style="left:620px;top:369px;font-size:10px;line-height:12px;color:#333;font-weight:bold;letter-spacing:-0.25px">service:channelTransactionManagementService</div>
<div class="a" style="left:855px;top:369px;font-size:10px;line-height:12px;color:#666">8.24 s</div>
<div class="a" style="left:620px;top:383px;font-size:10.3px;line-height:12px;color:#777">service.endpoint.request.duration.max</div>
<div class="a" style="left:535.5px;top:409px;width:330px;height:54.19999999999999px;overflow:hidden">
<div class="a sq" style="left:4.7px;top:7.0px;background:#5b8ff9"></div>
<div class="a lg" style="left:16.0px;top:4.0px">accountBalanceQueryService</div>
<div class="a sq" style="left:146.7px;top:7.0px;background:#5ad8a6"></div>
<div class="a lg" style="left:158.0px;top:4.0px">accountMgmtSvc</div>
<div class="a sq" style="left:4.7px;top:26.2px;background:#5d7092"></div>
<div class="a lg" style="left:16.0px;top:23.2px">accountReconciliationService</div>
<div class="a sq" style="left:147.6px;top:26.2px;background:#f6bd16"></div>
<div class="a lg" style="left:158.9px;top:23.2px">billPaymentSvc</div>
<div class="a sq" style="left:231.4px;top:26.2px;background:#6f5ef9"></div>
<div class="a lg" style="left:242.7px;top:23.2px">billQuerySvc</div>
<div class="a sq" style="left:4.7px;top:45.2px;background:#6dc8ec"></div>
<div class="a lg" style="left:16.0px;top:42.2px">channelAccountManagementService</div>
<div class="a sq" style="left:179.8px;top:45.2px;background:#945fb9"></div>
<div class="a lg" style="left:191.1px;top:42.2px">channelloanProcessingService</div>
</div>
<div class="a" style="left:871.5px;top:407px;width:16.5px;height:54px;background:#f1f1f1"></div>
<svg class="a" style="left:874.75px;top:412.5px" width="10" height="6"><path d="M1 5.5 L9 5.5 L5 1 Z" fill="#a3a3a3"/></svg>
<div class="a" style="left:872.5px;top:424px;width:14.5px;height:16.5px;background:#c1c1c1"></div>
<svg class="a" style="left:874.75px;top:450px" width="10" height="6"><path d="M1 0.5 L9 0.5 L5 5 Z" fill="#505050"/></svg>
<div class="a card" style="left:900px;top:264px;width:361px;height:206px;"></div>
<div class="a ct" style="left:907px;top:271.3px">异常请求</div>
<svg class="a" style="left:1253px;top:462px" width="6" height="6"><path d="M5 0.5 V5 H0.5" fill="none" stroke="#555" stroke-width="1.3"/></svg>
<svg class="a" style="left:0;top:0" width="1280" height="603">
<line x1="944.8" x2="1247.6" y1="309.1" y2="309.1" stroke="#e0e6f1" stroke-width="1"/>
<line x1="944.8" x2="1247.6" y1="331.2" y2="331.2" stroke="#e0e6f1" stroke-width="1"/>
<line x1="944.8" x2="1247.6" y1="353.2" y2="353.2" stroke="#e0e6f1" stroke-width="1"/>
<line x1="944.8" x2="1247.6" y1="375.2" y2="375.2" stroke="#e0e6f1" stroke-width="1"/>
<line x1="944.8" x2="1247.6" y1="397.3" y2="397.3" stroke="#e0e6f1" stroke-width="1"/>
<path d="M944.8 419.35 L944.8 370.8 L946.0 373.0 L947.5 392.9 L949.0 375.2 L950.0 368.6 L951.0 386.3 L952.3 366.4 L953.2 419.4 L953.2 419.35 Z" fill="#8cb0f9"/><path d="M944.8 370.8 L946.0 373.0 L947.5 392.9 L949.0 375.2 L950.0 368.6 L951.0 386.3 L952.3 366.4 L953.2 419.4" fill="none" stroke="#5286f4" stroke-width="1.7" stroke-linejoin="round"/>
<path d="M1093.5 419.35 L1093.5 419.4 L1095.0 392.9 L1096.0 384.1 L1097.0 381.9 L1098.0 386.3 L1099.0 412.7 L1100.0 397.3 L1101.0 386.3 L1102.0 388.5 L1103.0 419.4 L1103 419.35 Z" fill="#8cb0f9"/><path d="M1093.5 419.4 L1095.0 392.9 L1096.0 384.1 L1097.0 381.9 L1098.0 386.3 L1099.0 412.7 L1100.0 397.3 L1101.0 386.3 L1102.0 388.5 L1103.0 419.4" fill="none" stroke="#5286f4" stroke-width="1.7" stroke-linejoin="round"/>
<path d="M1194.5 419.35 L1194.5 419.4 L1196.0 335.6 L1197.0 331.2 L1198.0 333.4 L1199.0 326.7 L1200.0 324.5 L1201.0 353.2 L1202.0 324.5 L1203.0 322.3 L1204.0 326.7 L1205.5 419.4 L1205.5 419.35 Z" fill="#8cb0f9"/><path d="M1194.5 419.4 L1196.0 335.6 L1197.0 331.2 L1198.0 333.4 L1199.0 326.7 L1200.0 324.5 L1201.0 353.2 L1202.0 324.5 L1203.0 322.3 L1204.0 326.7 L1205.5 419.4" fill="none" stroke="#5286f4" stroke-width="1.7" stroke-linejoin="round"/>
<line x1="944.8" x2="1247.6" y1="419.35" y2="419.35" stroke="#5286f4" stroke-width="1.3"/>
<line x1="995.3" x2="995.3" y1="420.35" y2="423.85" stroke="#6e7079" stroke-width="1"/>
<line x1="1045.7" x2="1045.7" y1="420.35" y2="423.85" stroke="#6e7079" stroke-width="1"/>
<line x1="1096.2" x2="1096.2" y1="420.35" y2="423.85" stroke="#6e7079" stroke-width="1"/>
<line x1="1146.7" x2="1146.7" y1="420.35" y2="423.85" stroke="#6e7079" stroke-width="1"/>
<line x1="1197.1" x2="1197.1" y1="420.35" y2="423.85" stroke="#6e7079" stroke-width="1"/>
<line x1="1247.6" x2="1247.6" y1="420.35" y2="423.85" stroke="#6e7079" stroke-width="1"/>
</svg>
<div class="a yl" style="left:858.5px;width:80px;top:302.1px">50.00</div>
<div class="a yl" style="left:858.5px;width:80px;top:324.65000000000003px">40.00</div>
<div class="a yl" style="left:858.5px;width:80px;top:346.70000000000005px">30.00</div>
<div class="a yl" style="left:858.5px;width:80px;top:368.75px">20.00</div>
<div class="a yl" style="left:858.5px;width:80px;top:390.8px">10.00</div>
<div class="a" style="left:900px;top:424px;width:356px;height:14px;overflow:hidden">
<div class="a xl" style="left:55.3px;width:80px;text-align:center;top:1px">10:00</div>
<div class="a xl" style="left:105.7px;width:80px;text-align:center;top:1px">11:00</div>
<div class="a xl" style="left:156.2px;width:80px;text-align:center;top:1px">12:00</div>
<div class="a xl" style="left:206.7px;width:80px;text-align:center;top:1px">13:00</div>
<div class="a xl" style="left:257.1px;width:80px;text-align:center;top:1px">14:00</div>
<div class="a xl" style="left:307.6px;width:80px;text-align:center;top:1px">15:00</div>
</div>
<div class="a sq" style="left:906.5px;top:450px;background:#5b8ff9"></div>
<div class="a lg" style="left:917.5px;top:447.5px;font-size:9.4px">service.request.exception.total</div>
<div class="a card" style="left:166px;top:476px;width:544.5px;height:114px;"></div>
<div class="a ct" style="left:173px;top:484.1px">数据库请求</div>
<svg class="a" style="left:0;top:0" width="1280" height="603"><defs><clipPath id="c4"><rect x="166" y="476" width="544.5" height="114"/></clipPath></defs><g clip-path="url(#c4)">
<line x1="220" x2="693.7" y1="522.2" y2="522.2" stroke="#e0e6f1" stroke-width="1"/>
<line x1="220" x2="693.7" y1="540.5" y2="540.5" stroke="#e0e6f1" stroke-width="1"/>
<line x1="220" x2="693.7" y1="558.8" y2="558.8" stroke="#e0e6f1" stroke-width="1"/>
<line x1="220" x2="693.7" y1="577.1" y2="577.1" stroke="#e0e6f1" stroke-width="1"/>
<line x1="220" x2="693.7" y1="595.4" y2="595.4" stroke="#e0e6f1" stroke-width="1"/>
<path d="M220.0 600.0 L220.0 555.6 L221.2 558.5 L222.4 556.5 L223.6 560.3 L224.7 546.2 L225.9 553.1 L227.1 558.5 L228.3 557.8 L229.5 566.3 L230.7 561.4 L231.9 555.7 L233.1 549.5 L234.2 555.4 L235.4 563.4 L236.6 557.8 L237.8 558.0 L239.0 550.5 L240.2 542.7 L241.4 551.1 L242.6 555.7 L243.7 556.2 L244.9 548.3 L246.1 548.5 L247.3 547.1 L248.5 550.6 L249.7 557.0 L250.9 549.7 L252.1 552.1 L253.2 540.3 L254.4 549.8 L255.6 545.4 L256.8 547.6 L258.0 549.3 L259.2 553.7 L260.4 551.8 L261.6 552.0 L262.7 547.6 L263.9 546.8 L265.1 552.6 L266.3 545.0 L267.5 544.1 L268.7 540.6 L269.9 554.3 L271.1 550.5 L272.2 546.3 L273.4 548.1 L274.6 549.3 L275.8 550.2 L277.0 536.5 L278.2 547.3 L279.4 539.5 L280.5 549.0 L281.7 554.6 L282.9 550.7 L284.1 553.7 L285.3 543.5 L286.5 552.5 L287.7 545.3 L288.9 543.5 L290.0 548.8 L291.2 546.3 L292.4 538.2 L293.6 549.0 L294.8 548.8 L296.0 551.6 L297.2 546.4 L298.4 558.5 L299.5 544.4 L300.7 547.4 L301.9 549.0 L303.1 552.0 L304.3 553.2 L305.5 551.1 L306.7 551.8 L307.9 539.8 L309.0 544.9 L310.2 540.5 L311.4 533.2 L312.6 548.9 L313.8 553.8 L315.0 550.5 L316.2 550.5 L317.4 551.9 L318.5 548.5 L319.7 550.3 L320.9 549.0 L322.1 548.1 L323.3 539.8 L324.5 531.1 L325.7 545.1 L326.8 545.6 L328.0 544.5 L329.2 555.0 L330.4 554.2 L331.6 550.6 L332.8 549.2 L334.0 545.7 L335.2 547.3 L336.3 551.8 L337.5 551.2 L338.7 552.1 L339.9 545.3 L341.1 544.6 L342.3 549.8 L343.5 552.7 L344.7 552.5 L345.8 554.9 L347.0 547.6 L348.2 545.1 L349.4 541.6 L350.6 546.3 L351.8 555.5 L353.0 555.6 L354.2 536.9 L355.3 550.9 L356.5 544.0 L357.7 555.0 L358.9 538.7 L360.1 548.5 L361.3 546.6 L362.5 546.9 L363.7 545.8 L364.8 553.3 L366.0 555.0 L367.2 549.2 L368.4 547.5 L369.6 544.8 L370.8 548.1 L372.0 550.2 L373.2 552.4 L374.3 551.3 L375.5 549.7 L376.7 549.1 L377.9 539.7 L379.1 539.7 L380.3 539.3 L381.5 541.0 L382.6 554.0 L383.8 544.2 L385.0 545.8 L386.2 545.4 L387.4 546.8 L388.6 545.9 L389.8 537.6 L391.0 548.5 L392.1 533.2 L393.3 542.9 L394.5 543.6 L395.7 545.4 L396.9 549.9 L398.1 539.0 L399.3 542.0 L400.5 545.2 L401.6 540.3 L402.8 542.5 L404.0 550.0 L405.2 551.9 L406.4 548.4 L407.6 538.2 L408.8 544.6 L410.0 550.3 L411.1 550.3 L412.3 552.0 L413.5 561.3 L414.7 554.0 L415.9 544.0 L417.1 548.3 L418.3 541.5 L419.5 549.3 L420.6 548.5 L421.8 548.9 L423.0 548.5 L424.2 544.3 L425.4 550.3 L426.6 540.0 L427.8 543.8 L429.0 541.4 L430.1 544.0 L431.3 546.1 L432.5 548.9 L433.7 542.9 L434.9 548.1 L436.1 534.4 L437.3 548.9 L438.4 555.0 L439.6 556.3 L440.8 550.2 L442.0 549.3 L443.2 545.4 L444.4 543.1 L445.6 546.6 L446.8 551.6 L447.9 549.6 L449.1 543.5 L450.3 545.5 L451.5 544.4 L452.7 550.5 L453.9 540.5 L455.1 545.3 L456.3 545.3 L457.4 548.3 L458.6 554.2 L459.8 554.2 L461.0 552.2 L462.2 547.0 L463.4 549.0 L464.6 546.6 L465.8 541.7 L466.9 546.1 L468.1 559.8 L469.3 559.0 L470.5 556.0 L471.7 556.9 L472.9 554.3 L474.1 553.6 L475.3 551.8 L476.4 548.4 L477.6 552.4 L478.8 551.5 L480.0 551.8 L481.2 550.9 L482.4 550.7 L483.6 554.7 L484.7 546.8 L485.9 548.8 L487.1 546.9 L488.3 544.8 L489.5 550.7 L490.7 546.5 L491.9 552.7 L493.1 548.1 L494.2 539.6 L495.4 546.5 L496.6 548.7 L497.8 558.4 L499.0 552.3 L500.2 543.1 L501.4 556.7 L502.6 543.0 L503.7 540.5 L504.9 548.7 L506.1 546.6 L507.3 550.2 L508.5 544.6 L509.7 544.2 L510.9 544.1 L512.1 549.9 L513.2 549.5 L514.4 537.5 L515.6 552.2 L516.8 550.9 L518.0 545.3 L519.2 555.2 L520.4 555.7 L521.6 549.7 L522.7 548.9 L523.9 547.1 L525.1 538.7 L526.3 550.1 L527.5 551.1 L528.7 542.6 L529.9 552.4 L531.1 550.7 L532.2 553.0 L533.4 548.8 L534.6 544.5 L535.8 545.7 L537.0 549.4 L538.2 548.1 L539.4 550.6 L540.5 549.9 L541.7 550.2 L542.9 546.9 L544.1 552.5 L545.3 545.1 L546.5 549.1 L547.7 548.2 L548.9 553.2 L550.0 547.7 L551.2 548.8 L552.4 552.1 L553.6 554.3 L554.8 557.9 L556.0 551.0 L557.2 548.2 L558.4 556.2 L559.5 548.1 L560.7 546.7 L561.9 543.8 L563.1 543.3 L564.3 551.7 L565.5 546.1 L566.7 546.6 L567.9 544.2 L569.0 542.5 L570.2 541.2 L571.4 541.3 L572.6 549.2 L573.8 545.6 L575.0 552.3 L576.2 545.3 L577.4 549.3 L578.5 548.9 L579.7 547.3 L580.9 553.1 L582.1 542.5 L583.3 544.4 L584.5 556.4 L585.7 553.1 L586.9 549.4 L588.0 541.1 L589.2 558.9 L590.4 551.4 L591.6 550.7 L592.8 545.8 L594.0 545.8 L595.2 546.2 L596.3 535.9 L597.5 547.1 L598.7 550.6 L599.9 551.4 L601.1 543.6 L602.3 547.0 L603.5 551.5 L604.7 547.7 L605.8 545.8 L607.0 544.4 L608.2 551.0 L609.4 545.9 L610.6 545.3 L611.8 556.4 L613.0 558.9 L614.2 549.4 L615.3 561.1 L616.5 567.2 L617.7 560.6 L618.9 568.9 L620.1 569.4 L621.3 564.9 L622.5 565.5 L623.7 562.1 L624.8 567.4 L626.0 555.9 L627.2 566.1 L628.4 559.0 L629.6 559.7 L630.8 553.7 L632.0 557.5 L633.2 553.5 L634.3 554.4 L635.5 549.3 L636.7 546.0 L637.9 545.9 L639.1 552.1 L640.3 550.3 L641.5 544.7 L642.6 542.9 L643.8 538.3 L645.0 549.2 L646.2 552.2 L647.4 546.5 L648.6 550.0 L649.8 552.6 L651.0 540.0 L652.1 550.4 L653.3 549.1 L654.5 544.7 L655.7 547.0 L656.9 548.5 L658.1 552.4 L659.3 549.2 L660.5 546.7 L661.6 550.9 L662.8 550.0 L664.0 544.3 L665.2 537.8 L666.4 547.0 L667.6 545.1 L668.8 550.4 L670.0 550.8 L671.1 548.7 L672.3 549.4 L673.5 549.4 L674.7 551.3 L675.9 550.8 L677.1 555.5 L678.3 539.9 L679.5 544.7 L680.6 540.6 L681.8 551.0 L683.0 543.6 L684.2 545.8 L685.4 543.5 L686.6 544.3 L687.8 550.2 L689.0 548.7 L690.1 539.7 L691.3 540.6 L692.5 546.1 L693.7 544.3 L693.7 600.0 Z" fill="#8cb0f9"/>
<line x1="220" x2="693.7" y1="558.8" y2="558.8" stroke="#82a5f3" stroke-width="1" opacity="0.5"/>
<line x1="220" x2="693.7" y1="577.1" y2="577.1" stroke="#82a5f3" stroke-width="1" opacity="0.5"/>
<line x1="220" x2="693.7" y1="595.4" y2="595.4" stroke="#82a5f3" stroke-width="1" opacity="0.5"/>
<path d="M220.0 555.6 L221.2 558.5 L222.4 556.5 L223.6 560.3 L224.7 546.2 L225.9 553.1 L227.1 558.5 L228.3 557.8 L229.5 566.3 L230.7 561.4 L231.9 555.7 L233.1 549.5 L234.2 555.4 L235.4 563.4 L236.6 557.8 L237.8 558.0 L239.0 550.5 L240.2 542.7 L241.4 551.1 L242.6 555.7 L243.7 556.2 L244.9 548.3 L246.1 548.5 L247.3 547.1 L248.5 550.6 L249.7 557.0 L250.9 549.7 L252.1 552.1 L253.2 540.3 L254.4 549.8 L255.6 545.4 L256.8 547.6 L258.0 549.3 L259.2 553.7 L260.4 551.8 L261.6 552.0 L262.7 547.6 L263.9 546.8 L265.1 552.6 L266.3 545.0 L267.5 544.1 L268.7 540.6 L269.9 554.3 L271.1 550.5 L272.2 546.3 L273.4 548.1 L274.6 549.3 L275.8 550.2 L277.0 536.5 L278.2 547.3 L279.4 539.5 L280.5 549.0 L281.7 554.6 L282.9 550.7 L284.1 553.7 L285.3 543.5 L286.5 552.5 L287.7 545.3 L288.9 543.5 L290.0 548.8 L291.2 546.3 L292.4 538.2 L293.6 549.0 L294.8 548.8 L296.0 551.6 L297.2 546.4 L298.4 558.5 L299.5 544.4 L300.7 547.4 L301.9 549.0 L303.1 552.0 L304.3 553.2 L305.5 551.1 L306.7 551.8 L307.9 539.8 L309.0 544.9 L310.2 540.5 L311.4 533.2 L312.6 548.9 L313.8 553.8 L315.0 550.5 L316.2 550.5 L317.4 551.9 L318.5 548.5 L319.7 550.3 L320.9 549.0 L322.1 548.1 L323.3 539.8 L324.5 531.1 L325.7 545.1 L326.8 545.6 L328.0 544.5 L329.2 555.0 L330.4 554.2 L331.6 550.6 L332.8 549.2 L334.0 545.7 L335.2 547.3 L336.3 551.8 L337.5 551.2 L338.7 552.1 L339.9 545.3 L341.1 544.6 L342.3 549.8 L343.5 552.7 L344.7 552.5 L345.8 554.9 L347.0 547.6 L348.2 545.1 L349.4 541.6 L350.6 546.3 L351.8 555.5 L353.0 555.6 L354.2 536.9 L355.3 550.9 L356.5 544.0 L357.7 555.0 L358.9 538.7 L360.1 548.5 L361.3 546.6 L362.5 546.9 L363.7 545.8 L364.8 553.3 L366.0 555.0 L367.2 549.2 L368.4 547.5 L369.6 544.8 L370.8 548.1 L372.0 550.2 L373.2 552.4 L374.3 551.3 L375.5 549.7 L376.7 549.1 L377.9 539.7 L379.1 539.7 L380.3 539.3 L381.5 541.0 L382.6 554.0 L383.8 544.2 L385.0 545.8 L386.2 545.4 L387.4 546.8 L388.6 545.9 L389.8 537.6 L391.0 548.5 L392.1 533.2 L393.3 542.9 L394.5 543.6 L395.7 545.4 L396.9 549.9 L398.1 539.0 L399.3 542.0 L400.5 545.2 L401.6 540.3 L402.8 542.5 L404.0 550.0 L405.2 551.9 L406.4 548.4 L407.6 538.2 L408.8 544.6 L410.0 550.3 L411.1 550.3 L412.3 552.0 L413.5 561.3 L414.7 554.0 L415.9 544.0 L417.1 548.3 L418.3 541.5 L419.5 549.3 L420.6 548.5 L421.8 548.9 L423.0 548.5 L424.2 544.3 L425.4 550.3 L426.6 540.0 L427.8 543.8 L429.0 541.4 L430.1 544.0 L431.3 546.1 L432.5 548.9 L433.7 542.9 L434.9 548.1 L436.1 534.4 L437.3 548.9 L438.4 555.0 L439.6 556.3 L440.8 550.2 L442.0 549.3 L443.2 545.4 L444.4 543.1 L445.6 546.6 L446.8 551.6 L447.9 549.6 L449.1 543.5 L450.3 545.5 L451.5 544.4 L452.7 550.5 L453.9 540.5 L455.1 545.3 L456.3 545.3 L457.4 548.3 L458.6 554.2 L459.8 554.2 L461.0 552.2 L462.2 547.0 L463.4 549.0 L464.6 546.6 L465.8 541.7 L466.9 546.1 L468.1 559.8 L469.3 559.0 L470.5 556.0 L471.7 556.9 L472.9 554.3 L474.1 553.6 L475.3 551.8 L476.4 548.4 L477.6 552.4 L478.8 551.5 L480.0 551.8 L481.2 550.9 L482.4 550.7 L483.6 554.7 L484.7 546.8 L485.9 548.8 L487.1 546.9 L488.3 544.8 L489.5 550.7 L490.7 546.5 L491.9 552.7 L493.1 548.1 L494.2 539.6 L495.4 546.5 L496.6 548.7 L497.8 558.4 L499.0 552.3 L500.2 543.1 L501.4 556.7 L502.6 543.0 L503.7 540.5 L504.9 548.7 L506.1 546.6 L507.3 550.2 L508.5 544.6 L509.7 544.2 L510.9 544.1 L512.1 549.9 L513.2 549.5 L514.4 537.5 L515.6 552.2 L516.8 550.9 L518.0 545.3 L519.2 555.2 L520.4 555.7 L521.6 549.7 L522.7 548.9 L523.9 547.1 L525.1 538.7 L526.3 550.1 L527.5 551.1 L528.7 542.6 L529.9 552.4 L531.1 550.7 L532.2 553.0 L533.4 548.8 L534.6 544.5 L535.8 545.7 L537.0 549.4 L538.2 548.1 L539.4 550.6 L540.5 549.9 L541.7 550.2 L542.9 546.9 L544.1 552.5 L545.3 545.1 L546.5 549.1 L547.7 548.2 L548.9 553.2 L550.0 547.7 L551.2 548.8 L552.4 552.1 L553.6 554.3 L554.8 557.9 L556.0 551.0 L557.2 548.2 L558.4 556.2 L559.5 548.1 L560.7 546.7 L561.9 543.8 L563.1 543.3 L564.3 551.7 L565.5 546.1 L566.7 546.6 L567.9 544.2 L569.0 542.5 L570.2 541.2 L571.4 541.3 L572.6 549.2 L573.8 545.6 L575.0 552.3 L576.2 545.3 L577.4 549.3 L578.5 548.9 L579.7 547.3 L580.9 553.1 L582.1 542.5 L583.3 544.4 L584.5 556.4 L585.7 553.1 L586.9 549.4 L588.0 541.1 L589.2 558.9 L590.4 551.4 L591.6 550.7 L592.8 545.8 L594.0 545.8 L595.2 546.2 L596.3 535.9 L597.5 547.1 L598.7 550.6 L599.9 551.4 L601.1 543.6 L602.3 547.0 L603.5 551.5 L604.7 547.7 L605.8 545.8 L607.0 544.4 L608.2 551.0 L609.4 545.9 L610.6 545.3 L611.8 556.4 L613.0 558.9 L614.2 549.4 L615.3 561.1 L616.5 567.2 L617.7 560.6 L618.9 568.9 L620.1 569.4 L621.3 564.9 L622.5 565.5 L623.7 562.1 L624.8 567.4 L626.0 555.9 L627.2 566.1 L628.4 559.0 L629.6 559.7 L630.8 553.7 L632.0 557.5 L633.2 553.5 L634.3 554.4 L635.5 549.3 L636.7 546.0 L637.9 545.9 L639.1 552.1 L640.3 550.3 L641.5 544.7 L642.6 542.9 L643.8 538.3 L645.0 549.2 L646.2 552.2 L647.4 546.5 L648.6 550.0 L649.8 552.6 L651.0 540.0 L652.1 550.4 L653.3 549.1 L654.5 544.7 L655.7 547.0 L656.9 548.5 L658.1 552.4 L659.3 549.2 L660.5 546.7 L661.6 550.9 L662.8 550.0 L664.0 544.3 L665.2 537.8 L666.4 547.0 L667.6 545.1 L668.8 550.4 L670.0 550.8 L671.1 548.7 L672.3 549.4 L673.5 549.4 L674.7 551.3 L675.9 550.8 L677.1 555.5 L678.3 539.9 L679.5 544.7 L680.6 540.6 L681.8 551.0 L683.0 543.6 L684.2 545.8 L685.4 543.5 L686.6 544.3 L687.8 550.2 L689.0 548.7 L690.1 539.7 L691.3 540.6 L692.5 546.1 L693.7 544.3" fill="none" stroke="#5286f4" stroke-width="1.6" stroke-linejoin="round"/>
</g></svg>
<div class="a yl" style="left:133.8px;width:80px;top:516px">300.00</div>
<div class="a yl" style="left:133.8px;width:80px;top:534.2px">250.00</div>
<div class="a yl" style="left:133.8px;width:80px;top:552.8px">200.00</div>
<div class="a yl" style="left:133.8px;width:80px;top:571.1px">150.00</div>
<div class="a card" style="left:717px;top:476px;width:544px;height:114px;"></div>
<div class="a ct" style="left:724px;top:484.1px">数据库响应时间</div>
<svg class="a" style="left:0;top:0" width="1280" height="603"><defs><clipPath id="c5"><rect x="717" y="476" width="544" height="114"/></clipPath></defs><g clip-path="url(#c5)">
<line x1="781.6" x2="1243.7" y1="522.2" y2="522.2" stroke="#e0e6f1" stroke-width="1"/>
<line x1="781.6" x2="1243.7" y1="544.3" y2="544.3" stroke="#e0e6f1" stroke-width="1"/>
<line x1="781.6" x2="1243.7" y1="566.5" y2="566.5" stroke="#e0e6f1" stroke-width="1"/>
<line x1="781.6" x2="1243.7" y1="588.7" y2="588.7" stroke="#e0e6f1" stroke-width="1"/>
<path d="M781.6 600.0 L781.6 527.4 L782.8 527.2 L783.9 526.4 L785.1 527.2 L786.2 527.3 L787.4 526.8 L788.5 526.9 L789.7 527.2 L790.9 526.6 L792.0 526.9 L793.2 527.2 L794.3 527.1 L795.5 526.5 L796.7 526.4 L797.8 527.0 L799.0 526.2 L800.1 527.0 L801.3 526.6 L802.4 526.8 L803.6 526.8 L804.8 527.1 L805.9 526.4 L807.1 526.9 L808.2 527.3 L809.4 526.8 L810.6 527.5 L811.7 526.4 L812.9 527.2 L814.0 527.4 L815.2 526.6 L816.3 526.7 L817.5 527.1 L818.7 527.6 L819.8 526.6 L821.0 527.0 L822.1 527.2 L823.3 527.0 L824.5 526.3 L825.6 526.8 L826.8 527.3 L827.9 527.0 L829.1 526.9 L830.2 526.8 L831.4 527.4 L832.6 527.6 L833.7 526.4 L834.9 526.3 L836.0 527.0 L837.2 527.2 L838.3 526.8 L839.5 526.9 L840.7 527.2 L841.8 526.9 L843.0 526.7 L844.1 526.1 L845.3 526.7 L846.5 527.0 L847.6 527.4 L848.8 526.0 L849.9 526.7 L851.1 526.5 L852.2 526.9 L853.4 527.4 L854.6 526.6 L855.7 527.3 L856.9 527.4 L858.0 526.2 L859.2 527.4 L860.4 527.3 L861.5 526.8 L862.7 526.7 L863.8 527.0 L865.0 526.9 L866.1 527.1 L867.3 527.2 L868.5 527.4 L869.6 527.3 L870.8 527.0 L871.9 526.4 L873.1 526.6 L874.3 526.2 L875.4 526.6 L876.6 526.9 L877.7 527.1 L878.9 526.7 L880.0 526.8 L881.2 527.7 L882.4 526.8 L883.5 526.6 L884.7 526.3 L885.8 526.9 L887.0 527.3 L888.1 526.7 L889.3 527.1 L890.5 526.6 L891.6 527.2 L892.8 526.9 L893.9 526.8 L895.1 526.7 L896.3 526.9 L897.4 527.3 L898.6 526.8 L899.7 526.6 L900.9 526.7 L902.0 526.7 L903.2 526.4 L904.4 527.3 L905.5 526.7 L906.7 526.8 L907.8 527.4 L909.0 527.4 L910.2 527.1 L911.3 526.7 L912.5 527.4 L913.6 527.2 L914.8 527.2 L915.9 526.9 L917.1 527.0 L918.3 526.8 L919.4 527.6 L920.6 526.6 L921.7 527.2 L922.9 527.1 L924.1 526.0 L925.2 526.9 L926.4 527.4 L927.5 527.0 L928.7 526.3 L929.8 526.7 L931.0 527.2 L932.2 527.0 L933.3 526.6 L934.5 526.4 L935.6 526.9 L936.8 527.1 L937.9 526.7 L939.1 526.8 L940.3 526.7 L941.4 527.1 L942.6 527.2 L943.7 526.6 L944.9 526.5 L946.1 527.1 L947.2 526.8 L948.4 526.5 L949.5 526.8 L950.7 526.9 L951.8 527.7 L953.0 527.1 L954.2 527.1 L955.3 527.4 L956.5 527.0 L957.6 526.8 L958.8 526.7 L960.0 527.3 L961.1 526.7 L962.3 527.1 L963.4 527.7 L964.6 527.1 L965.7 526.7 L966.9 527.0 L968.1 526.8 L969.2 526.7 L970.4 527.2 L971.5 527.2 L972.7 526.8 L973.9 526.7 L975.0 527.1 L976.2 527.0 L977.3 526.7 L978.5 527.1 L979.6 526.6 L980.8 526.2 L982.0 526.7 L983.1 526.9 L984.3 527.3 L985.4 526.6 L986.6 526.6 L987.7 526.5 L988.9 527.2 L990.1 526.8 L991.2 527.1 L992.4 527.4 L993.5 526.9 L994.7 526.3 L995.9 526.6 L997.0 527.2 L998.2 527.3 L999.3 526.5 L1000.5 527.0 L1001.6 527.1 L1002.8 526.5 L1004.0 526.4 L1005.1 527.1 L1006.3 527.3 L1007.4 527.5 L1008.6 526.8 L1009.8 526.9 L1010.9 526.1 L1012.1 527.0 L1013.2 527.3 L1014.4 526.9 L1015.5 526.8 L1016.7 527.7 L1017.9 526.9 L1019.0 527.0 L1020.2 526.9 L1021.3 527.3 L1022.5 526.8 L1023.7 526.8 L1024.8 526.6 L1026.0 527.4 L1027.1 526.8 L1028.3 527.1 L1029.4 526.8 L1030.6 526.5 L1031.8 526.8 L1032.9 526.5 L1034.1 527.1 L1035.2 526.5 L1036.4 527.5 L1037.6 526.8 L1038.7 526.8 L1039.9 526.5 L1041.0 526.6 L1042.2 526.7 L1043.3 527.5 L1044.5 527.2 L1045.7 527.1 L1046.8 526.3 L1048.0 527.2 L1049.1 526.6 L1050.3 527.3 L1051.4 526.9 L1052.6 527.0 L1053.8 526.9 L1054.9 526.6 L1056.1 527.2 L1057.2 527.1 L1058.4 526.5 L1059.6 527.0 L1060.7 526.6 L1061.9 526.6 L1063.0 526.3 L1064.2 526.8 L1065.3 526.9 L1066.5 526.9 L1067.7 526.9 L1068.8 526.8 L1070.0 527.1 L1071.1 526.9 L1072.3 526.7 L1073.5 526.9 L1074.6 526.8 L1075.8 527.0 L1076.9 527.4 L1078.1 527.0 L1079.2 526.8 L1080.4 526.6 L1081.6 526.7 L1082.7 526.8 L1083.9 526.8 L1085.0 527.0 L1086.2 526.9 L1087.4 527.2 L1088.5 526.6 L1089.7 526.8 L1090.8 526.8 L1092.0 526.6 L1093.1 526.2 L1094.3 527.1 L1095.5 527.5 L1096.6 527.5 L1097.8 526.0 L1098.9 526.4 L1100.1 526.7 L1101.2 526.6 L1102.4 527.4 L1103.6 526.7 L1104.7 527.4 L1105.9 526.2 L1107.0 526.1 L1108.2 526.9 L1109.4 526.7 L1110.5 527.0 L1111.7 527.2 L1112.8 526.5 L1114.0 527.2 L1115.1 526.9 L1116.3 527.3 L1117.5 526.6 L1118.6 527.0 L1119.8 526.7 L1120.9 526.6 L1122.1 527.1 L1123.3 526.9 L1124.4 527.3 L1125.6 526.6 L1126.7 526.8 L1127.9 526.9 L1129.0 526.5 L1130.2 526.4 L1131.4 526.6 L1132.5 527.3 L1133.7 526.8 L1134.8 526.9 L1136.0 527.1 L1137.2 526.7 L1138.3 526.3 L1139.5 527.0 L1140.6 527.4 L1141.8 526.4 L1142.9 526.4 L1144.1 527.4 L1145.3 527.2 L1146.4 527.3 L1147.6 526.3 L1148.7 527.2 L1149.9 526.8 L1151.0 526.4 L1152.2 527.0 L1153.4 526.6 L1154.5 526.7 L1155.7 527.0 L1156.8 526.8 L1158.0 527.1 L1159.2 526.9 L1160.3 526.7 L1161.5 527.3 L1162.6 526.7 L1163.8 526.7 L1164.9 527.0 L1166.1 526.5 L1167.3 527.0 L1168.4 527.5 L1169.6 527.7 L1170.7 526.7 L1171.9 527.2 L1173.1 526.8 L1174.2 527.2 L1175.4 526.8 L1176.5 527.6 L1177.7 527.2 L1178.8 527.0 L1180.0 526.6 L1181.2 526.7 L1182.3 526.7 L1183.5 527.3 L1184.6 527.2 L1185.8 527.0 L1187.0 526.4 L1188.1 527.1 L1189.3 526.6 L1190.4 527.1 L1191.6 526.7 L1192.7 526.7 L1193.9 526.7 L1195.1 526.8 L1196.2 526.6 L1197.4 526.6 L1198.5 526.5 L1199.7 526.3 L1200.8 527.2 L1202.0 525.9 L1203.2 527.0 L1204.3 527.8 L1205.5 526.6 L1206.6 527.0 L1207.8 526.1 L1209.0 527.1 L1210.1 527.5 L1211.3 526.7 L1212.4 526.8 L1213.6 527.1 L1214.7 527.0 L1215.9 527.4 L1217.1 526.9 L1218.2 526.8 L1219.4 528.0 L1220.5 526.9 L1221.7 526.8 L1222.9 527.0 L1224.0 526.7 L1225.2 526.9 L1226.3 527.1 L1227.5 526.5 L1228.6 526.3 L1229.8 526.4 L1231.0 527.1 L1232.1 527.1 L1233.3 527.0 L1234.4 526.4 L1235.6 526.6 L1236.8 527.0 L1237.9 526.3 L1239.1 526.3 L1240.2 527.6 L1241.4 526.7 L1242.5 527.1 L1243.7 526.9 L1243.7 600.0 Z" fill="#92b8fd"/>
<line x1="781.6" x2="1243.7" y1="544.3" y2="544.3" stroke="#86abf6" stroke-width="1" opacity="0.6"/>
<line x1="781.6" x2="1243.7" y1="566.5" y2="566.5" stroke="#86abf6" stroke-width="1" opacity="0.6"/>
<line x1="781.6" x2="1243.7" y1="588.7" y2="588.7" stroke="#86abf6" stroke-width="1" opacity="0.6"/>
<path d="M781.6 527.4 L782.8 527.2 L783.9 526.4 L785.1 527.2 L786.2 527.3 L787.4 526.8 L788.5 526.9 L789.7 527.2 L790.9 526.6 L792.0 526.9 L793.2 527.2 L794.3 527.1 L795.5 526.5 L796.7 526.4 L797.8 527.0 L799.0 526.2 L800.1 527.0 L801.3 526.6 L802.4 526.8 L803.6 526.8 L804.8 527.1 L805.9 526.4 L807.1 526.9 L808.2 527.3 L809.4 526.8 L810.6 527.5 L811.7 526.4 L812.9 527.2 L814.0 527.4 L815.2 526.6 L816.3 526.7 L817.5 527.1 L818.7 527.6 L819.8 526.6 L821.0 527.0 L822.1 527.2 L823.3 527.0 L824.5 526.3 L825.6 526.8 L826.8 527.3 L827.9 527.0 L829.1 526.9 L830.2 526.8 L831.4 527.4 L832.6 527.6 L833.7 526.4 L834.9 526.3 L836.0 527.0 L837.2 527.2 L838.3 526.8 L839.5 526.9 L840.7 527.2 L841.8 526.9 L843.0 526.7 L844.1 526.1 L845.3 526.7 L846.5 527.0 L847.6 527.4 L848.8 526.0 L849.9 526.7 L851.1 526.5 L852.2 526.9 L853.4 527.4 L854.6 526.6 L855.7 527.3 L856.9 527.4 L858.0 526.2 L859.2 527.4 L860.4 527.3 L861.5 526.8 L862.7 526.7 L863.8 527.0 L865.0 526.9 L866.1 527.1 L867.3 527.2 L868.5 527.4 L869.6 527.3 L870.8 527.0 L871.9 526.4 L873.1 526.6 L874.3 526.2 L875.4 526.6 L876.6 526.9 L877.7 527.1 L878.9 526.7 L880.0 526.8 L881.2 527.7 L882.4 526.8 L883.5 526.6 L884.7 526.3 L885.8 526.9 L887.0 527.3 L888.1 526.7 L889.3 527.1 L890.5 526.6 L891.6 527.2 L892.8 526.9 L893.9 526.8 L895.1 526.7 L896.3 526.9 L897.4 527.3 L898.6 526.8 L899.7 526.6 L900.9 526.7 L902.0 526.7 L903.2 526.4 L904.4 527.3 L905.5 526.7 L906.7 526.8 L907.8 527.4 L909.0 527.4 L910.2 527.1 L911.3 526.7 L912.5 527.4 L913.6 527.2 L914.8 527.2 L915.9 526.9 L917.1 527.0 L918.3 526.8 L919.4 527.6 L920.6 526.6 L921.7 527.2 L922.9 527.1 L924.1 526.0 L925.2 526.9 L926.4 527.4 L927.5 527.0 L928.7 526.3 L929.8 526.7 L931.0 527.2 L932.2 527.0 L933.3 526.6 L934.5 526.4 L935.6 526.9 L936.8 527.1 L937.9 526.7 L939.1 526.8 L940.3 526.7 L941.4 527.1 L942.6 527.2 L943.7 526.6 L944.9 526.5 L946.1 527.1 L947.2 526.8 L948.4 526.5 L949.5 526.8 L950.7 526.9 L951.8 527.7 L953.0 527.1 L954.2 527.1 L955.3 527.4 L956.5 527.0 L957.6 526.8 L958.8 526.7 L960.0 527.3 L961.1 526.7 L962.3 527.1 L963.4 527.7 L964.6 527.1 L965.7 526.7 L966.9 527.0 L968.1 526.8 L969.2 526.7 L970.4 527.2 L971.5 527.2 L972.7 526.8 L973.9 526.7 L975.0 527.1 L976.2 527.0 L977.3 526.7 L978.5 527.1 L979.6 526.6 L980.8 526.2 L982.0 526.7 L983.1 526.9 L984.3 527.3 L985.4 526.6 L986.6 526.6 L987.7 526.5 L988.9 527.2 L990.1 526.8 L991.2 527.1 L992.4 527.4 L993.5 526.9 L994.7 526.3 L995.9 526.6 L997.0 527.2 L998.2 527.3 L999.3 526.5 L1000.5 527.0 L1001.6 527.1 L1002.8 526.5 L1004.0 526.4 L1005.1 527.1 L1006.3 527.3 L1007.4 527.5 L1008.6 526.8 L1009.8 526.9 L1010.9 526.1 L1012.1 527.0 L1013.2 527.3 L1014.4 526.9 L1015.5 526.8 L1016.7 527.7 L1017.9 526.9 L1019.0 527.0 L1020.2 526.9 L1021.3 527.3 L1022.5 526.8 L1023.7 526.8 L1024.8 526.6 L1026.0 527.4 L1027.1 526.8 L1028.3 527.1 L1029.4 526.8 L1030.6 526.5 L1031.8 526.8 L1032.9 526.5 L1034.1 527.1 L1035.2 526.5 L1036.4 527.5 L1037.6 526.8 L1038.7 526.8 L1039.9 526.5 L1041.0 526.6 L1042.2 526.7 L1043.3 527.5 L1044.5 527.2 L1045.7 527.1 L1046.8 526.3 L1048.0 527.2 L1049.1 526.6 L1050.3 527.3 L1051.4 526.9 L1052.6 527.0 L1053.8 526.9 L1054.9 526.6 L1056.1 527.2 L1057.2 527.1 L1058.4 526.5 L1059.6 527.0 L1060.7 526.6 L1061.9 526.6 L1063.0 526.3 L1064.2 526.8 L1065.3 526.9 L1066.5 526.9 L1067.7 526.9 L1068.8 526.8 L1070.0 527.1 L1071.1 526.9 L1072.3 526.7 L1073.5 526.9 L1074.6 526.8 L1075.8 527.0 L1076.9 527.4 L1078.1 527.0 L1079.2 526.8 L1080.4 526.6 L1081.6 526.7 L1082.7 526.8 L1083.9 526.8 L1085.0 527.0 L1086.2 526.9 L1087.4 527.2 L1088.5 526.6 L1089.7 526.8 L1090.8 526.8 L1092.0 526.6 L1093.1 526.2 L1094.3 527.1 L1095.5 527.5 L1096.6 527.5 L1097.8 526.0 L1098.9 526.4 L1100.1 526.7 L1101.2 526.6 L1102.4 527.4 L1103.6 526.7 L1104.7 527.4 L1105.9 526.2 L1107.0 526.1 L1108.2 526.9 L1109.4 526.7 L1110.5 527.0 L1111.7 527.2 L1112.8 526.5 L1114.0 527.2 L1115.1 526.9 L1116.3 527.3 L1117.5 526.6 L1118.6 527.0 L1119.8 526.7 L1120.9 526.6 L1122.1 527.1 L1123.3 526.9 L1124.4 527.3 L1125.6 526.6 L1126.7 526.8 L1127.9 526.9 L1129.0 526.5 L1130.2 526.4 L1131.4 526.6 L1132.5 527.3 L1133.7 526.8 L1134.8 526.9 L1136.0 527.1 L1137.2 526.7 L1138.3 526.3 L1139.5 527.0 L1140.6 527.4 L1141.8 526.4 L1142.9 526.4 L1144.1 527.4 L1145.3 527.2 L1146.4 527.3 L1147.6 526.3 L1148.7 527.2 L1149.9 526.8 L1151.0 526.4 L1152.2 527.0 L1153.4 526.6 L1154.5 526.7 L1155.7 527.0 L1156.8 526.8 L1158.0 527.1 L1159.2 526.9 L1160.3 526.7 L1161.5 527.3 L1162.6 526.7 L1163.8 526.7 L1164.9 527.0 L1166.1 526.5 L1167.3 527.0 L1168.4 527.5 L1169.6 527.7 L1170.7 526.7 L1171.9 527.2 L1173.1 526.8 L1174.2 527.2 L1175.4 526.8 L1176.5 527.6 L1177.7 527.2 L1178.8 527.0 L1180.0 526.6 L1181.2 526.7 L1182.3 526.7 L1183.5 527.3 L1184.6 527.2 L1185.8 527.0 L1187.0 526.4 L1188.1 527.1 L1189.3 526.6 L1190.4 527.1 L1191.6 526.7 L1192.7 526.7 L1193.9 526.7 L1195.1 526.8 L1196.2 526.6 L1197.4 526.6 L1198.5 526.5 L1199.7 526.3 L1200.8 527.2 L1202.0 525.9 L1203.2 527.0 L1204.3 527.8 L1205.5 526.6 L1206.6 527.0 L1207.8 526.1 L1209.0 527.1 L1210.1 527.5 L1211.3 526.7 L1212.4 526.8 L1213.6 527.1 L1214.7 527.0 L1215.9 527.4 L1217.1 526.9 L1218.2 526.8 L1219.4 528.0 L1220.5 526.9 L1221.7 526.8 L1222.9 527.0 L1224.0 526.7 L1225.2 526.9 L1226.3 527.1 L1227.5 526.5 L1228.6 526.3 L1229.8 526.4 L1231.0 527.1 L1232.1 527.1 L1233.3 527.0 L1234.4 526.4 L1235.6 526.6 L1236.8 527.0 L1237.9 526.3 L1239.1 526.3 L1240.2 527.6 L1241.4 526.7 L1242.5 527.1 L1243.7 526.9" fill="none" stroke="#5b8ff9" stroke-width="1.2"/>
<circle cx="832.3" cy="526.3" r="2.4" fill="#5b8ff9"/>
</g></svg>
<div class="a yl" style="left:694.8px;width:80px;top:515.6px">25.00 ms</div>
<div class="a yl" style="left:694.8px;width:80px;top:537.5px">20.00 ms</div>
<div class="a yl" style="left:694.8px;width:80px;top:560px">15.00 ms</div>
<div class="a yl" style="left:694.8px;width:80px;top:582px">10.00 ms</div>
<svg class="a" style="left:1231px;top:300px" width="44" height="44" viewBox="0 0 44 44">
<defs><clipPath id="rc"><circle cx="21.8" cy="22.4" r="19"/></clipPath></defs>
<circle cx="21.8" cy="22.4" r="19.6" fill="#fff"/>
<circle cx="21.8" cy="22.4" r="18.8" fill="#8edada"/>
<g clip-path="url(#rc)">
<path d="M12.5 42 Q12.5 30.5 22 30.5 Q31.5 30.5 31.5 42 Z" fill="#1f9092"/>
<path d="M7.2 22 Q7.2 8.8 21.8 8.8 Q36.4 8.8 36.4 22 Q36.4 29.5 21.8 29.5 Q7.2 29.5 7.2 22 Z" fill="#eef8f8"/>
<path d="M9.5 17 Q10 14 13 14 Q16 14 17.5 17.5 Q22 18.5 26 17.5 Q27.5 14 30.5 14 Q33.8 14 34.2 17 Q35 23 33 27.2 Q22 30.5 10.5 27.2 Q8.8 23 9.5 17 Z" fill="#0b1b1f"/>
<path d="M13 24 A3.1 3.1 0 0 1 19.2 24 M24.5 24 A3.1 3.1 0 0 1 30.7 24" fill="none" stroke="#2bd3de" stroke-width="1.7" stroke-linecap="round"/>
<rect x="6" y="19" width="2" height="5.5" rx="1" fill="#3ccfd4"/><rect x="35.8" y="19" width="2" height="5.5" rx="1" fill="#3ccfd4"/>
<circle cx="21.5" cy="10.2" r="4.3" fill="#5bcfd0"/>
<circle cx="21.5" cy="10.2" r="2" fill="none" stroke="#c9f1f1" stroke-width="0.8"/>
</g>
</svg>
<svg class="a" style="left:1250px;top:490px" width="30" height="75" viewBox="0 0 30 75">
<path d="M25 70 Q23 56 26 51 Q30 49 30 49 V70 Z" fill="#2a9c9c"/>
<ellipse cx="31" cy="33.5" rx="22.5" ry="16" fill="#f3fbfb"/>
<path d="M11.5 33 Q12.5 27 22 26.5 Q26 27 30 26 V48 Q18 48 13 42 Q11 38 11.5 33 Z" fill="#0c1f23"/>
<circle cx="21.9" cy="37.5" r="5.3" fill="#27c4cf"/>
<circle cx="22.5" cy="37.8" r="2.6" fill="#35d0da" opacity="0.7"/>
<path d="M7.5 39 Q10 38 14 43 Q17 47 16.5 50 Q13 50 10 46 Q7.5 42 7.5 39 Z" fill="#2ab7b7"/>
<path d="M18 11 L23.7 8.5 L29.5 11 L30 19 L23.7 22.5 L18 19.5 Z" fill="#20b2b3" stroke="#20b2b3" stroke-width="2" stroke-linejoin="round"/>
<path d="M21.5 18 Q20 14 22.5 13 Q24.5 13 24 15.5 L22.5 17 Q25 19 27 17 Q28.5 15 26.5 13.5" fill="none" stroke="#fff" stroke-width="1"/>
</svg>
</body></html>
